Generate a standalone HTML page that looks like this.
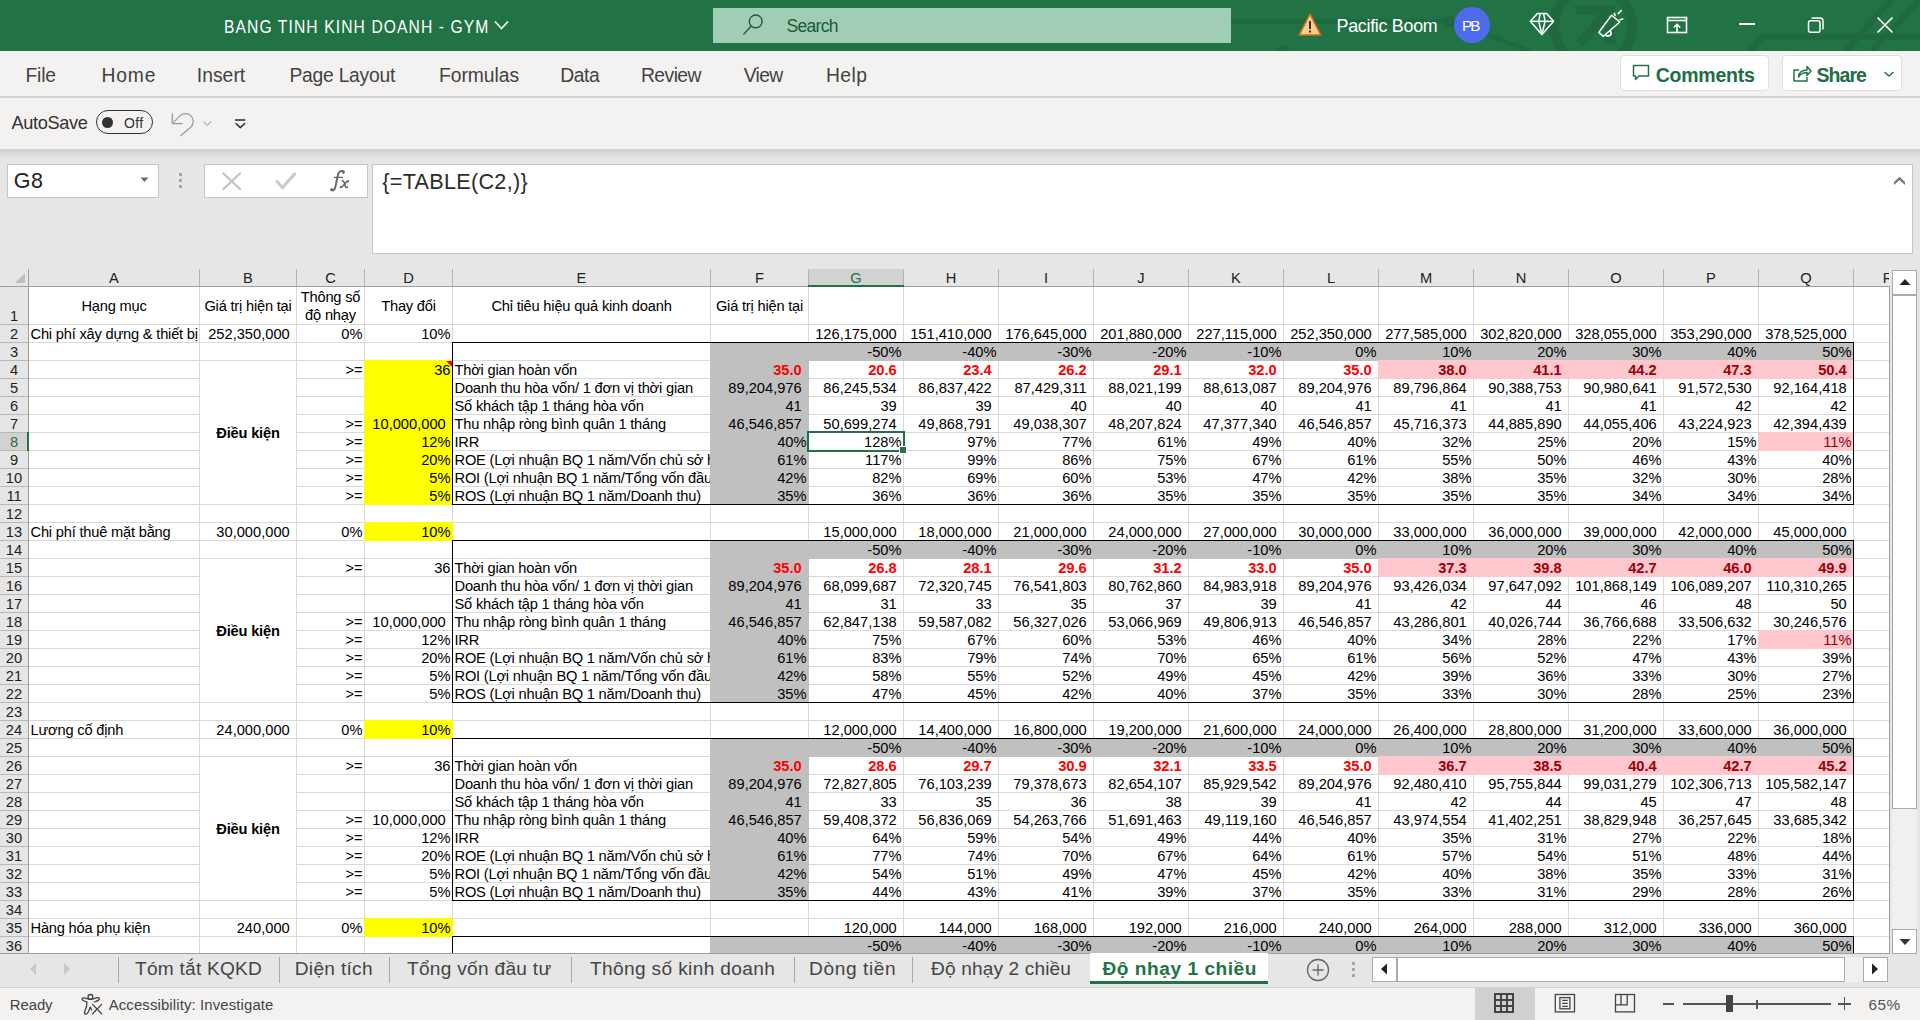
<!DOCTYPE html><html><head><meta charset="utf-8"><style>
*{margin:0;padding:0;box-sizing:border-box}
html,body{width:1920px;height:1020px;overflow:hidden;background:#f3f2f1;font-family:"Liberation Sans",sans-serif}
.a{position:absolute}
.t{position:absolute;white-space:nowrap;line-height:1}
svg{position:absolute;overflow:visible}
.c{position:absolute;white-space:nowrap;font-size:14.67px;line-height:17px;height:17px;color:#000;overflow:hidden}
.hc{position:absolute;white-space:nowrap;font-size:14.67px;line-height:17px;color:#222;text-align:center}
</style></head><body>

<div class="a" style="left:0px;top:0px;width:1920px;height:51px;background:#217346"></div>
<svg width="1920" height="51" style="left:0;top:0" viewBox="0 0 1920 51">
<g stroke="#1f6740" stroke-width="4.5" fill="none" opacity="0.9">
<path d="M1231 21.6 H1446"/><circle cx="1450" cy="21.6" r="3.5"/><path d="M1453 24 L1475 30 L1530 51"/>
<circle cx="1593" cy="26" r="39" stroke-width="10"/>
<path d="M1576 10 H1614.5" stroke-width="10"/><path d="M1610 10 L1580 44" stroke-width="10"/><path d="M1609.6 5 V43.5" stroke-width="10"/>
<path d="M1750 51 L1763 37 H1920" stroke-width="6"/>
<path d="M1891 0 L1845 51" stroke-width="6"/><path d="M1920 0 L1872 51" stroke-width="6"/>
<circle cx="1283" cy="51" r="4"/>
</g></svg>
<div class="t" style="left:223.94px;top:18.20px;font-size:18.2px;color:#fff;font-weight:normal;letter-spacing:1.275px;font-family:'Liberation Sans',sans-serif;transform:scaleX(0.86);transform-origin:0 0;">BANG TINH KINH DOANH - GYM</div>
<svg width="20" height="20" style="left:492px;top:17px" viewBox="0 0 20 20"><path d="M3 4.5 L9.5 11.5 L16 4.5" stroke="#fff" stroke-width="1.6" fill="none"/></svg>
<div class="a" style="left:713px;top:8px;width:518px;height:35px;background:#a1cdb5"></div>
<svg width="30" height="30" style="left:740px;top:12px" viewBox="0 0 30 30"><circle cx="15.7" cy="9.4" r="6.4" stroke="#1b5a37" stroke-width="1.4" fill="none"/><path d="M11.2 14 L3.4 22.6" stroke="#1b5a37" stroke-width="1.4"/></svg>
<div class="t" style="left:786.50px;top:17.80px;font-size:17.5px;color:#1b5a37;font-weight:normal;letter-spacing:-0.700px;font-family:'Liberation Sans',sans-serif;">Search</div>
<svg width="24" height="24" style="left:1298px;top:12px" viewBox="0 0 24 24"><path d="M12 2 L22.8 23 H1.2 Z" fill="#f7d08a" stroke="#d2691e" stroke-width="1.6" stroke-linejoin="round"/><rect x="11" y="9" width="2" height="8" fill="#333"/><rect x="11" y="18.5" width="2" height="2" fill="#333"/></svg>
<div class="t" style="left:1336.50px;top:17.90px;font-size:17.9px;color:#fff;font-weight:normal;letter-spacing:-0.291px;font-family:'Liberation Sans',sans-serif;">Pacific Boom</div>
<div class="a" style="left:1454px;top:7px;width:36px;height:36px;border-radius:50%;background:#4f6bed"></div>
<div class="t" style="left:1462.00px;top:18.00px;font-size:15.3px;color:#fff;font-weight:normal;letter-spacing:-2.000px;font-family:'Liberation Sans',sans-serif;">PB</div>
<svg width="30" height="30" style="left:1527px;top:9px" viewBox="1527 9 30 30"><g stroke="#fff" stroke-width="1.5" fill="none" stroke-linejoin="round"><path d="M1537.4 13.4 H1546.6 L1553.6 21.3 L1541.9 34.4 L1530.3 21.3 Z"/><path d="M1530.3 21.3 H1553.6"/><path d="M1540.2 13.4 L1538.7 21.3 L1541.9 34.4 L1545.1 21.3 L1543.6 13.4"/></g></svg>
<svg width="40" height="40" style="left:1590px;top:5px" viewBox="1590 5 40 40"><g stroke="#fff" stroke-width="1.5" fill="none" stroke-linejoin="round" stroke-linecap="round"><path d="M1598.8 32.4 L1611.5 15.2 L1619.8 22 L1603.2 36.4 Z"/><path d="M1605.5 34.6 A2.8 2.8 0 1 0 1610.6 31.3"/><path d="M1614.2 13.4 L1615.2 15.4"/><path d="M1618.2 13.6 L1621.2 10.6"/><path d="M1620 19.8 L1622.8 19"/></g></svg>
<svg width="24" height="20" style="left:1666px;top:16px" viewBox="0 0 24 20"><g stroke="#fff" stroke-width="1.6" fill="none"><rect x="1.5" y="1.5" width="19" height="15"/><path d="M1.5 4.5 H20.5"/><path d="M11 16.5 V8.5 M7.8 11.5 L11 8.3 L14.2 11.5"/></g></svg>
<div class="a" style="left:1739px;top:23px;width:16px;height:1.5px;background:#fff"></div>
<svg width="20" height="20" style="left:1806px;top:15px" viewBox="0 0 20 20"><g stroke="#fff" stroke-width="1.5" fill="none"><rect x="2.5" y="5.8" width="11.5" height="11.5" rx="2"/><path d="M5.5 3 H14 A3 3 0 0 1 17 6 V14.5"/></g></svg>
<svg width="20" height="20" style="left:1875px;top:15px" viewBox="0 0 20 20"><g stroke="#fff" stroke-width="1.6" fill="none"><path d="M2.5 2.5 L17.5 17.5 M17.5 2.5 L2.5 17.5"/></g></svg>
<div class="a" style="left:0px;top:51px;width:1920px;height:46px;background:#f3f2f1"></div>
<div class="a" style="left:0px;top:96px;width:1920px;height:2px;background:#d6d4d2"></div>
<div class="t" style="left:25.40px;top:65.80px;font-size:19.3px;color:#424242;font-weight:normal;letter-spacing:-0.133px;font-family:'Liberation Sans',sans-serif;">File</div>
<div class="t" style="left:101.50px;top:65.80px;font-size:19.3px;color:#424242;font-weight:normal;letter-spacing:0.833px;font-family:'Liberation Sans',sans-serif;">Home</div>
<div class="t" style="left:196.75px;top:65.80px;font-size:19.3px;color:#424242;font-weight:normal;letter-spacing:0.050px;font-family:'Liberation Sans',sans-serif;">Insert</div>
<div class="t" style="left:289.50px;top:65.80px;font-size:19.3px;color:#424242;font-weight:normal;letter-spacing:-0.250px;font-family:'Liberation Sans',sans-serif;">Page Layout</div>
<div class="t" style="left:439.00px;top:65.80px;font-size:19.3px;color:#424242;font-weight:normal;letter-spacing:-0.036px;font-family:'Liberation Sans',sans-serif;">Formulas</div>
<div class="t" style="left:560.25px;top:65.80px;font-size:19.3px;color:#424242;font-weight:normal;letter-spacing:-0.417px;font-family:'Liberation Sans',sans-serif;">Data</div>
<div class="t" style="left:641.00px;top:65.80px;font-size:19.3px;color:#424242;font-weight:normal;letter-spacing:-0.550px;font-family:'Liberation Sans',sans-serif;">Review</div>
<div class="t" style="left:743.75px;top:65.80px;font-size:19.3px;color:#424242;font-weight:normal;letter-spacing:-0.667px;font-family:'Liberation Sans',sans-serif;">View</div>
<div class="t" style="left:826.00px;top:65.80px;font-size:19.3px;color:#424242;font-weight:normal;letter-spacing:0.417px;font-family:'Liberation Sans',sans-serif;">Help</div>
<div class="a" style="left:1620px;top:55px;width:149px;height:36px;background:#fff;border:1px solid #e1dfdd;border-radius:4px"></div>
<svg width="20" height="20" style="left:1632px;top:64px" viewBox="0 0 20 20"><path d="M1.5 1.5 H16.5 V12 H7 L3.5 15.5 V12 H1.5 Z" stroke="#217346" stroke-width="1.5" fill="none" stroke-linejoin="round"/></svg>
<div class="t" style="left:1655.70px;top:65.50px;font-size:19.5px;color:#1e6e42;font-weight:bold;letter-spacing:-0.243px;font-family:'Liberation Sans',sans-serif;">Comments</div>
<div class="a" style="left:1782px;top:55px;width:120px;height:36px;background:#fff;border:1px solid #e1dfdd;border-radius:4px"></div>
<svg width="20" height="20" style="left:1792px;top:64px" viewBox="0 0 20 20"><g stroke="#217346" stroke-width="1.5" fill="none" stroke-linejoin="round"><path d="M7 6 H2 V17 H15 V13"/><path d="M6.5 13 C7 8 10 6 15 6 V2.5 L19 7 L15 11.5 V8.5 C11 8.5 8.5 10 6.5 13 Z"/></g></svg>
<div class="t" style="left:1816.50px;top:65.50px;font-size:19.5px;color:#1e6e42;font-weight:bold;letter-spacing:-0.950px;font-family:'Liberation Sans',sans-serif;">Share</div>
<svg width="12" height="10" style="left:1883px;top:69px" viewBox="0 0 12 10"><path d="M1.5 3 L6 7 L10.5 3" stroke="#217346" stroke-width="1.5" fill="none"/></svg>
<div class="a" style="left:0px;top:98px;width:1920px;height:51px;background:#f3f2f1"></div>
<div class="t" style="left:11.50px;top:114.00px;font-size:18.2px;color:#323130;font-weight:normal;letter-spacing:-0.357px;font-family:'Liberation Sans',sans-serif;">AutoSave</div>
<div class="a" style="left:96px;top:110px;width:57px;height:24px;border:1px solid #323130;border-radius:12px"></div>
<div class="a" style="left:102px;top:117px;width:11px;height:11px;border-radius:50%;background:#323130"></div>
<div class="t" style="left:124.00px;top:116.30px;font-size:14px;color:#323130;font-weight:normal;letter-spacing:0.375px;font-family:'Liberation Sans',sans-serif;">Off</div>
<svg width="100" height="40" style="left:160px;top:100px" viewBox="160 100 100 40"><g fill="none" stroke-linejoin="round"><path d="M172.3 113.4 V123.6 H182.5" stroke="#9a9a9a" stroke-width="1.3"/><path d="M173.3 122.6 L180 115.9 C183 112.9 188 112.9 191 115.9 C194 118.9 194 124 191 127 L180.3 136" stroke="#9a9a9a" stroke-width="1.3"/><path d="M203.5 121.5 L207.3 125.3 L211.1 121.5" stroke="#b3b3b3" stroke-width="1.1"/><path d="M235 120 H245.3" stroke="#333" stroke-width="1.6"/><path d="M235.6 123.2 L240.3 127.6 L245 123.2" stroke="#333" stroke-width="1.5"/></g></svg>
<div class="a" style="left:0;top:149px;width:1920px;height:10px;background:linear-gradient(#cecece,#e6e6e6)"></div>
<div class="a" style="left:0px;top:159px;width:1920px;height:110px;background:#e6e6e6"></div>
<div class="a" style="left:7px;top:164px;width:152px;height:34px;background:#fff;border:1px solid #c6c6c6"></div>
<div class="t" style="left:13.80px;top:170.60px;font-size:21.5px;color:#222;font-weight:normal;letter-spacing:0.500px;font-family:'Liberation Sans',sans-serif;">G8</div>
<svg width="10" height="6" style="left:140px;top:177px" viewBox="0 0 10 6"><path d="M0.5 0.5 H8.5 L4.5 5 Z" fill="#6b6b6b"/></svg>
<div class="a" style="left:179px;top:173px;width:3px;height:3px;background:#a6a6a6"></div>
<div class="a" style="left:179px;top:179px;width:3px;height:3px;background:#a6a6a6"></div>
<div class="a" style="left:179px;top:185px;width:3px;height:3px;background:#a6a6a6"></div>
<div class="a" style="left:204px;top:164px;width:164px;height:34px;background:#fff;border:1px solid #c6c6c6"></div>
<svg width="20" height="20" style="left:222px;top:171px" viewBox="0 0 20 20"><path d="M1.5 2.5 L18 18 M18 2.5 L1.5 18" stroke="#c2c2c2" stroke-width="2.2" fill="none" stroke-linecap="round"/></svg>
<svg width="22" height="20" style="left:275px;top:171px" viewBox="0 0 22 20"><path d="M2 10.5 L7.5 16.5 L19.5 3" stroke="#cbcbcb" stroke-width="3.2" fill="none" stroke-linecap="round"/></svg>
<svg width="30" height="30" style="left:325px;top:166px" viewBox="325 166 30 30"><g stroke="#666" fill="none" stroke-linecap="round"><path d="M343.6 171.4 C341 170.2 338.7 171.6 337.9 175 L335.6 186 C335 189 333.6 191.2 331.6 190.2" stroke-width="1.9"/><path d="M334.4 177.4 H342.4" stroke-width="1.3"/><path d="M342.2 180.7 C343.6 180.7 344.1 181.6 344.6 183.5 L345.3 186.2 C345.7 187.4 346.6 187.8 347.4 187.1" stroke-width="1.6"/><path d="M348.1 181 C346.5 181.6 344.6 184 342.9 186 C342.1 187 341.4 187.6 340.6 187.3" stroke-width="1.4"/></g><g fill="#666"><circle cx="343.4" cy="172.4" r="1.4"/><circle cx="331.5" cy="189.6" r="1.4"/><circle cx="348" cy="181.4" r="1.1"/><circle cx="340.7" cy="187.2" r="1.1"/></g></svg>
<div class="a" style="left:372px;top:164px;width:1541px;height:90px;background:#fff;border:1px solid #c6c6c6"></div>
<div class="t" style="left:382.20px;top:170.60px;font-size:21.6px;color:#2b2b2b;font-weight:normal;letter-spacing:0.308px;font-family:'Liberation Sans',sans-serif;">{=TABLE(C2,)}</div>
<svg width="20" height="14" style="left:1890px;top:174px" viewBox="1890 174 20 14"><path d="M1894 185 V182 L1899.5 176.7 L1905 182 V185 L1899.5 180 Z" fill="#767676"/></svg>
<div class="a" style="left:0px;top:269px;width:1889px;height:18px;background:#e6e6e6"></div>
<div class="a" style="left:0px;top:287px;width:28px;height:666px;background:#e6e6e6"></div>
<div class="a" style="left:29px;top:287px;width:1860px;height:666px;background:#fff"></div>
<div class="a" style="left:809px;top:269px;width:94px;height:17px;background:#d2d2d2"></div>
<div class="a" style="left:0px;top:433px;width:27px;height:17px;background:#d2d2d2"></div>
<div class="a" style="left:199px;top:287px;width:1px;height:666px;background:#d9d9d9"></div>
<div class="a" style="left:296px;top:287px;width:1px;height:666px;background:#d9d9d9"></div>
<div class="a" style="left:364px;top:287px;width:1px;height:666px;background:#d9d9d9"></div>
<div class="a" style="left:452px;top:287px;width:1px;height:666px;background:#d9d9d9"></div>
<div class="a" style="left:710px;top:287px;width:1px;height:666px;background:#d9d9d9"></div>
<div class="a" style="left:808px;top:287px;width:1px;height:666px;background:#d9d9d9"></div>
<div class="a" style="left:903px;top:287px;width:1px;height:666px;background:#d9d9d9"></div>
<div class="a" style="left:998px;top:287px;width:1px;height:666px;background:#d9d9d9"></div>
<div class="a" style="left:1093px;top:287px;width:1px;height:666px;background:#d9d9d9"></div>
<div class="a" style="left:1188px;top:287px;width:1px;height:666px;background:#d9d9d9"></div>
<div class="a" style="left:1283px;top:287px;width:1px;height:666px;background:#d9d9d9"></div>
<div class="a" style="left:1378px;top:287px;width:1px;height:666px;background:#d9d9d9"></div>
<div class="a" style="left:1473px;top:287px;width:1px;height:666px;background:#d9d9d9"></div>
<div class="a" style="left:1568px;top:287px;width:1px;height:666px;background:#d9d9d9"></div>
<div class="a" style="left:1663px;top:287px;width:1px;height:666px;background:#d9d9d9"></div>
<div class="a" style="left:1758px;top:287px;width:1px;height:666px;background:#d9d9d9"></div>
<div class="a" style="left:1853px;top:287px;width:1px;height:666px;background:#d9d9d9"></div>
<div class="a" style="left:29px;top:324px;width:1860px;height:1px;background:#d9d9d9"></div>
<div class="a" style="left:29px;top:342px;width:1860px;height:1px;background:#d9d9d9"></div>
<div class="a" style="left:29px;top:360px;width:1860px;height:1px;background:#d9d9d9"></div>
<div class="a" style="left:29px;top:378px;width:1860px;height:1px;background:#d9d9d9"></div>
<div class="a" style="left:29px;top:396px;width:1860px;height:1px;background:#d9d9d9"></div>
<div class="a" style="left:29px;top:414px;width:1860px;height:1px;background:#d9d9d9"></div>
<div class="a" style="left:29px;top:432px;width:1860px;height:1px;background:#d9d9d9"></div>
<div class="a" style="left:29px;top:450px;width:1860px;height:1px;background:#d9d9d9"></div>
<div class="a" style="left:29px;top:468px;width:1860px;height:1px;background:#d9d9d9"></div>
<div class="a" style="left:29px;top:486px;width:1860px;height:1px;background:#d9d9d9"></div>
<div class="a" style="left:29px;top:504px;width:1860px;height:1px;background:#d9d9d9"></div>
<div class="a" style="left:29px;top:522px;width:1860px;height:1px;background:#d9d9d9"></div>
<div class="a" style="left:29px;top:540px;width:1860px;height:1px;background:#d9d9d9"></div>
<div class="a" style="left:29px;top:558px;width:1860px;height:1px;background:#d9d9d9"></div>
<div class="a" style="left:29px;top:576px;width:1860px;height:1px;background:#d9d9d9"></div>
<div class="a" style="left:29px;top:594px;width:1860px;height:1px;background:#d9d9d9"></div>
<div class="a" style="left:29px;top:612px;width:1860px;height:1px;background:#d9d9d9"></div>
<div class="a" style="left:29px;top:630px;width:1860px;height:1px;background:#d9d9d9"></div>
<div class="a" style="left:29px;top:648px;width:1860px;height:1px;background:#d9d9d9"></div>
<div class="a" style="left:29px;top:666px;width:1860px;height:1px;background:#d9d9d9"></div>
<div class="a" style="left:29px;top:684px;width:1860px;height:1px;background:#d9d9d9"></div>
<div class="a" style="left:29px;top:702px;width:1860px;height:1px;background:#d9d9d9"></div>
<div class="a" style="left:29px;top:720px;width:1860px;height:1px;background:#d9d9d9"></div>
<div class="a" style="left:29px;top:738px;width:1860px;height:1px;background:#d9d9d9"></div>
<div class="a" style="left:29px;top:756px;width:1860px;height:1px;background:#d9d9d9"></div>
<div class="a" style="left:29px;top:774px;width:1860px;height:1px;background:#d9d9d9"></div>
<div class="a" style="left:29px;top:792px;width:1860px;height:1px;background:#d9d9d9"></div>
<div class="a" style="left:29px;top:810px;width:1860px;height:1px;background:#d9d9d9"></div>
<div class="a" style="left:29px;top:828px;width:1860px;height:1px;background:#d9d9d9"></div>
<div class="a" style="left:29px;top:846px;width:1860px;height:1px;background:#d9d9d9"></div>
<div class="a" style="left:29px;top:864px;width:1860px;height:1px;background:#d9d9d9"></div>
<div class="a" style="left:29px;top:882px;width:1860px;height:1px;background:#d9d9d9"></div>
<div class="a" style="left:29px;top:900px;width:1860px;height:1px;background:#d9d9d9"></div>
<div class="a" style="left:29px;top:918px;width:1860px;height:1px;background:#d9d9d9"></div>
<div class="a" style="left:29px;top:936px;width:1860px;height:1px;background:#d9d9d9"></div>
<div class="a" style="left:199px;top:269px;width:1px;height:17px;background:#b3b3b3"></div>
<div class="a" style="left:296px;top:269px;width:1px;height:17px;background:#b3b3b3"></div>
<div class="a" style="left:364px;top:269px;width:1px;height:17px;background:#b3b3b3"></div>
<div class="a" style="left:452px;top:269px;width:1px;height:17px;background:#b3b3b3"></div>
<div class="a" style="left:710px;top:269px;width:1px;height:17px;background:#b3b3b3"></div>
<div class="a" style="left:808px;top:269px;width:1px;height:17px;background:#b3b3b3"></div>
<div class="a" style="left:903px;top:269px;width:1px;height:17px;background:#b3b3b3"></div>
<div class="a" style="left:998px;top:269px;width:1px;height:17px;background:#b3b3b3"></div>
<div class="a" style="left:1093px;top:269px;width:1px;height:17px;background:#b3b3b3"></div>
<div class="a" style="left:1188px;top:269px;width:1px;height:17px;background:#b3b3b3"></div>
<div class="a" style="left:1283px;top:269px;width:1px;height:17px;background:#b3b3b3"></div>
<div class="a" style="left:1378px;top:269px;width:1px;height:17px;background:#b3b3b3"></div>
<div class="a" style="left:1473px;top:269px;width:1px;height:17px;background:#b3b3b3"></div>
<div class="a" style="left:1568px;top:269px;width:1px;height:17px;background:#b3b3b3"></div>
<div class="a" style="left:1663px;top:269px;width:1px;height:17px;background:#b3b3b3"></div>
<div class="a" style="left:1758px;top:269px;width:1px;height:17px;background:#b3b3b3"></div>
<div class="a" style="left:1853px;top:269px;width:1px;height:17px;background:#b3b3b3"></div>
<div class="a" style="left:0px;top:324px;width:28px;height:1px;background:#b8b8b8"></div>
<div class="a" style="left:0px;top:342px;width:28px;height:1px;background:#b8b8b8"></div>
<div class="a" style="left:0px;top:360px;width:28px;height:1px;background:#b8b8b8"></div>
<div class="a" style="left:0px;top:378px;width:28px;height:1px;background:#b8b8b8"></div>
<div class="a" style="left:0px;top:396px;width:28px;height:1px;background:#b8b8b8"></div>
<div class="a" style="left:0px;top:414px;width:28px;height:1px;background:#b8b8b8"></div>
<div class="a" style="left:0px;top:432px;width:28px;height:1px;background:#b8b8b8"></div>
<div class="a" style="left:0px;top:450px;width:28px;height:1px;background:#b8b8b8"></div>
<div class="a" style="left:0px;top:468px;width:28px;height:1px;background:#b8b8b8"></div>
<div class="a" style="left:0px;top:486px;width:28px;height:1px;background:#b8b8b8"></div>
<div class="a" style="left:0px;top:504px;width:28px;height:1px;background:#b8b8b8"></div>
<div class="a" style="left:0px;top:522px;width:28px;height:1px;background:#b8b8b8"></div>
<div class="a" style="left:0px;top:540px;width:28px;height:1px;background:#b8b8b8"></div>
<div class="a" style="left:0px;top:558px;width:28px;height:1px;background:#b8b8b8"></div>
<div class="a" style="left:0px;top:576px;width:28px;height:1px;background:#b8b8b8"></div>
<div class="a" style="left:0px;top:594px;width:28px;height:1px;background:#b8b8b8"></div>
<div class="a" style="left:0px;top:612px;width:28px;height:1px;background:#b8b8b8"></div>
<div class="a" style="left:0px;top:630px;width:28px;height:1px;background:#b8b8b8"></div>
<div class="a" style="left:0px;top:648px;width:28px;height:1px;background:#b8b8b8"></div>
<div class="a" style="left:0px;top:666px;width:28px;height:1px;background:#b8b8b8"></div>
<div class="a" style="left:0px;top:684px;width:28px;height:1px;background:#b8b8b8"></div>
<div class="a" style="left:0px;top:702px;width:28px;height:1px;background:#b8b8b8"></div>
<div class="a" style="left:0px;top:720px;width:28px;height:1px;background:#b8b8b8"></div>
<div class="a" style="left:0px;top:738px;width:28px;height:1px;background:#b8b8b8"></div>
<div class="a" style="left:0px;top:756px;width:28px;height:1px;background:#b8b8b8"></div>
<div class="a" style="left:0px;top:774px;width:28px;height:1px;background:#b8b8b8"></div>
<div class="a" style="left:0px;top:792px;width:28px;height:1px;background:#b8b8b8"></div>
<div class="a" style="left:0px;top:810px;width:28px;height:1px;background:#b8b8b8"></div>
<div class="a" style="left:0px;top:828px;width:28px;height:1px;background:#b8b8b8"></div>
<div class="a" style="left:0px;top:846px;width:28px;height:1px;background:#b8b8b8"></div>
<div class="a" style="left:0px;top:864px;width:28px;height:1px;background:#b8b8b8"></div>
<div class="a" style="left:0px;top:882px;width:28px;height:1px;background:#b8b8b8"></div>
<div class="a" style="left:0px;top:900px;width:28px;height:1px;background:#b8b8b8"></div>
<div class="a" style="left:0px;top:918px;width:28px;height:1px;background:#b8b8b8"></div>
<div class="a" style="left:0px;top:936px;width:28px;height:1px;background:#b8b8b8"></div>
<div class="a" style="left:0px;top:286px;width:1889px;height:1px;background:#9e9e9e"></div>
<div class="a" style="left:28px;top:269px;width:1px;height:684px;background:#9e9e9e"></div>
<div class="a" style="left:0px;top:953px;width:1889px;height:1px;background:#9e9e9e"></div>
<div class="a" style="left:1889px;top:286px;width:1px;height:668px;background:#9e9e9e"></div>
<div class="a" style="left:808px;top:285px;width:96px;height:2px;background:#217346"></div>
<div class="a" style="left:27px;top:432px;width:2px;height:19px;background:#217346"></div>
<svg width="12" height="12" style="left:15px;top:273px" viewBox="0 0 12 12"><path d="M10 0 V10 H0 Z" fill="#bfbfbf"/></svg>
<div class="hc" style="left:29px;top:270.40px;width:170px;color:#222">A</div>
<div class="hc" style="left:200px;top:270.40px;width:96px;color:#222">B</div>
<div class="hc" style="left:297px;top:270.40px;width:67px;color:#222">C</div>
<div class="hc" style="left:365px;top:270.40px;width:87px;color:#222">D</div>
<div class="hc" style="left:453px;top:270.40px;width:257px;color:#222">E</div>
<div class="hc" style="left:711px;top:270.40px;width:97px;color:#222">F</div>
<div class="hc" style="left:809px;top:270.40px;width:94px;color:#217346">G</div>
<div class="hc" style="left:904px;top:270.40px;width:94px;color:#222">H</div>
<div class="hc" style="left:999px;top:270.40px;width:94px;color:#222">I</div>
<div class="hc" style="left:1094px;top:270.40px;width:94px;color:#222">J</div>
<div class="hc" style="left:1189px;top:270.40px;width:94px;color:#222">K</div>
<div class="hc" style="left:1284px;top:270.40px;width:94px;color:#222">L</div>
<div class="hc" style="left:1379px;top:270.40px;width:94px;color:#222">M</div>
<div class="hc" style="left:1474px;top:270.40px;width:94px;color:#222">N</div>
<div class="hc" style="left:1569px;top:270.40px;width:94px;color:#222">O</div>
<div class="hc" style="left:1664px;top:270.40px;width:94px;color:#222">P</div>
<div class="hc" style="left:1759px;top:270.40px;width:94px;color:#222">Q</div>
<div class="a" style="left:1854px;top:269px;width:35px;height:17px;overflow:hidden"><div class="hc" style="left:24px;top:1.4px;width:20px;color:#222">R</div></div>
<div class="hc" style="left:0px;top:308.40px;width:28px;color:#222">1</div>
<div class="hc" style="left:0px;top:326.40px;width:28px;color:#222">2</div>
<div class="hc" style="left:0px;top:344.40px;width:28px;color:#222">3</div>
<div class="hc" style="left:0px;top:362.40px;width:28px;color:#222">4</div>
<div class="hc" style="left:0px;top:380.40px;width:28px;color:#222">5</div>
<div class="hc" style="left:0px;top:398.40px;width:28px;color:#222">6</div>
<div class="hc" style="left:0px;top:416.40px;width:28px;color:#222">7</div>
<div class="hc" style="left:0px;top:434.40px;width:28px;color:#217346">8</div>
<div class="hc" style="left:0px;top:452.40px;width:28px;color:#222">9</div>
<div class="hc" style="left:0px;top:470.40px;width:28px;color:#222">10</div>
<div class="hc" style="left:0px;top:488.40px;width:28px;color:#222">11</div>
<div class="hc" style="left:0px;top:506.40px;width:28px;color:#222">12</div>
<div class="hc" style="left:0px;top:524.40px;width:28px;color:#222">13</div>
<div class="hc" style="left:0px;top:542.40px;width:28px;color:#222">14</div>
<div class="hc" style="left:0px;top:560.40px;width:28px;color:#222">15</div>
<div class="hc" style="left:0px;top:578.40px;width:28px;color:#222">16</div>
<div class="hc" style="left:0px;top:596.40px;width:28px;color:#222">17</div>
<div class="hc" style="left:0px;top:614.40px;width:28px;color:#222">18</div>
<div class="hc" style="left:0px;top:632.40px;width:28px;color:#222">19</div>
<div class="hc" style="left:0px;top:650.40px;width:28px;color:#222">20</div>
<div class="hc" style="left:0px;top:668.40px;width:28px;color:#222">21</div>
<div class="hc" style="left:0px;top:686.40px;width:28px;color:#222">22</div>
<div class="hc" style="left:0px;top:704.40px;width:28px;color:#222">23</div>
<div class="hc" style="left:0px;top:722.40px;width:28px;color:#222">24</div>
<div class="hc" style="left:0px;top:740.40px;width:28px;color:#222">25</div>
<div class="hc" style="left:0px;top:758.40px;width:28px;color:#222">26</div>
<div class="hc" style="left:0px;top:776.40px;width:28px;color:#222">27</div>
<div class="hc" style="left:0px;top:794.40px;width:28px;color:#222">28</div>
<div class="hc" style="left:0px;top:812.40px;width:28px;color:#222">29</div>
<div class="hc" style="left:0px;top:830.40px;width:28px;color:#222">30</div>
<div class="hc" style="left:0px;top:848.40px;width:28px;color:#222">31</div>
<div class="hc" style="left:0px;top:866.40px;width:28px;color:#222">32</div>
<div class="hc" style="left:0px;top:884.40px;width:28px;color:#222">33</div>
<div class="hc" style="left:0px;top:902.40px;width:28px;color:#222">34</div>
<div class="hc" style="left:0px;top:920.40px;width:28px;color:#222">35</div>
<div class="hc" style="left:0px;top:938.40px;width:28px;color:#222">36</div>
<div class="a" style="left:710px;top:342px;width:99px;height:163px;background:#c0c0c0"></div>
<div class="a" style="left:808px;top:342px;width:1046px;height:19px;background:#c0c0c0"></div>
<div class="a" style="left:200px;top:361px;width:96px;height:143px;background:#fff"></div>
<div class="a" style="left:710px;top:540px;width:99px;height:163px;background:#c0c0c0"></div>
<div class="a" style="left:808px;top:540px;width:1046px;height:19px;background:#c0c0c0"></div>
<div class="a" style="left:200px;top:559px;width:96px;height:143px;background:#fff"></div>
<div class="a" style="left:364px;top:522px;width:89px;height:19px;background:#ffff00"></div>
<div class="a" style="left:710px;top:738px;width:99px;height:163px;background:#c0c0c0"></div>
<div class="a" style="left:808px;top:738px;width:1046px;height:19px;background:#c0c0c0"></div>
<div class="a" style="left:200px;top:757px;width:96px;height:143px;background:#fff"></div>
<div class="a" style="left:364px;top:720px;width:89px;height:19px;background:#ffff00"></div>
<div class="a" style="left:710px;top:936px;width:99px;height:17px;background:#c0c0c0"></div>
<div class="a" style="left:808px;top:936px;width:1046px;height:17px;background:#c0c0c0"></div>
<div class="a" style="left:364px;top:918px;width:89px;height:19px;background:#ffff00"></div>
<div class="a" style="left:364px;top:360px;width:89px;height:145px;background:#ffff00"></div>
<div class="a" style="left:1378px;top:360px;width:476px;height:19px;background:#ffc7ce"></div>
<div class="a" style="left:1758px;top:432px;width:96px;height:19px;background:#ffc7ce"></div>
<div class="a" style="left:1378px;top:558px;width:476px;height:19px;background:#ffc7ce"></div>
<div class="a" style="left:1758px;top:630px;width:96px;height:19px;background:#ffc7ce"></div>
<div class="a" style="left:1378px;top:756px;width:476px;height:19px;background:#ffc7ce"></div>
<div class="a" style="left:452px;top:342px;width:1402px;height:1px;background:#000"></div>
<div class="a" style="left:452px;top:342px;width:1px;height:162px;background:#000"></div>
<div class="a" style="left:1853px;top:342px;width:1px;height:162px;background:#000"></div>
<div class="a" style="left:452px;top:504px;width:1402px;height:1px;background:#000"></div>
<div class="a" style="left:452px;top:540px;width:1402px;height:1px;background:#000"></div>
<div class="a" style="left:452px;top:540px;width:1px;height:162px;background:#000"></div>
<div class="a" style="left:1853px;top:540px;width:1px;height:162px;background:#000"></div>
<div class="a" style="left:452px;top:702px;width:1402px;height:1px;background:#000"></div>
<div class="a" style="left:452px;top:738px;width:1402px;height:1px;background:#000"></div>
<div class="a" style="left:452px;top:738px;width:1px;height:162px;background:#000"></div>
<div class="a" style="left:1853px;top:738px;width:1px;height:162px;background:#000"></div>
<div class="a" style="left:452px;top:900px;width:1402px;height:1px;background:#000"></div>
<div class="a" style="left:452px;top:936px;width:1402px;height:1px;background:#000"></div>
<div class="a" style="left:452px;top:936px;width:1px;height:17px;background:#000"></div>
<div class="a" style="left:1853px;top:936px;width:1px;height:17px;background:#000"></div>
<div class="c" style="left:29px;top:298.40px;width:170px;color:#000;text-align:center;letter-spacing:-0.2px;">Hạng mục</div>
<div class="c" style="left:200px;top:298.40px;width:96px;color:#000;text-align:center;letter-spacing:-0.2px;">Giá trị hiện tại</div>
<div class="c" style="left:365px;top:298.40px;width:87px;color:#000;text-align:center;letter-spacing:-0.2px;">Thay đổi</div>
<div class="c" style="left:453px;top:298.40px;width:257px;color:#000;text-align:center;letter-spacing:-0.2px;">Chỉ tiêu hiệu quả kinh doanh</div>
<div class="c" style="left:711px;top:298.40px;width:97px;color:#000;text-align:center;letter-spacing:-0.2px;">Giá trị hiện tại</div>
<div class="c" style="left:297px;top:289.40px;width:67px;color:#000;text-align:center;letter-spacing:-0.2px;">Thông số</div>
<div class="c" style="left:297px;top:307.40px;width:67px;color:#000;text-align:center;letter-spacing:-0.2px;">độ nhạy</div>
<div class="c" style="left:29px;top:326.40px;width:170px;color:#000;text-align:left;padding-left:1.5px;letter-spacing:-0.2px;overflow:visible;">Chi phí xây dựng &amp; thiết bị</div>
<div class="c" style="left:200px;top:326.40px;width:96px;color:#000;text-align:right;padding-right:6.3px;">252,350,000</div>
<div class="c" style="left:297px;top:326.40px;width:67px;color:#000;text-align:right;padding-right:1.5px;">0%</div>
<div class="c" style="left:365px;top:326.40px;width:87px;color:#000;text-align:right;padding-right:1.5px;">10%</div>
<div class="c" style="left:809px;top:326.40px;width:94px;color:#000;text-align:right;padding-right:6.3px;">126,175,000</div>
<div class="c" style="left:809px;top:344.40px;width:94px;color:#000;text-align:right;padding-right:1.5px;">-50%</div>
<div class="c" style="left:904px;top:326.40px;width:94px;color:#000;text-align:right;padding-right:6.3px;">151,410,000</div>
<div class="c" style="left:904px;top:344.40px;width:94px;color:#000;text-align:right;padding-right:1.5px;">-40%</div>
<div class="c" style="left:999px;top:326.40px;width:94px;color:#000;text-align:right;padding-right:6.3px;">176,645,000</div>
<div class="c" style="left:999px;top:344.40px;width:94px;color:#000;text-align:right;padding-right:1.5px;">-30%</div>
<div class="c" style="left:1094px;top:326.40px;width:94px;color:#000;text-align:right;padding-right:6.3px;">201,880,000</div>
<div class="c" style="left:1094px;top:344.40px;width:94px;color:#000;text-align:right;padding-right:1.5px;">-20%</div>
<div class="c" style="left:1189px;top:326.40px;width:94px;color:#000;text-align:right;padding-right:6.3px;">227,115,000</div>
<div class="c" style="left:1189px;top:344.40px;width:94px;color:#000;text-align:right;padding-right:1.5px;">-10%</div>
<div class="c" style="left:1284px;top:326.40px;width:94px;color:#000;text-align:right;padding-right:6.3px;">252,350,000</div>
<div class="c" style="left:1284px;top:344.40px;width:94px;color:#000;text-align:right;padding-right:1.5px;">0%</div>
<div class="c" style="left:1379px;top:326.40px;width:94px;color:#000;text-align:right;padding-right:6.3px;">277,585,000</div>
<div class="c" style="left:1379px;top:344.40px;width:94px;color:#000;text-align:right;padding-right:1.5px;">10%</div>
<div class="c" style="left:1474px;top:326.40px;width:94px;color:#000;text-align:right;padding-right:6.3px;">302,820,000</div>
<div class="c" style="left:1474px;top:344.40px;width:94px;color:#000;text-align:right;padding-right:1.5px;">20%</div>
<div class="c" style="left:1569px;top:326.40px;width:94px;color:#000;text-align:right;padding-right:6.3px;">328,055,000</div>
<div class="c" style="left:1569px;top:344.40px;width:94px;color:#000;text-align:right;padding-right:1.5px;">30%</div>
<div class="c" style="left:1664px;top:326.40px;width:94px;color:#000;text-align:right;padding-right:6.3px;">353,290,000</div>
<div class="c" style="left:1664px;top:344.40px;width:94px;color:#000;text-align:right;padding-right:1.5px;">40%</div>
<div class="c" style="left:1759px;top:326.40px;width:94px;color:#000;text-align:right;padding-right:6.3px;">378,525,000</div>
<div class="c" style="left:1759px;top:344.40px;width:94px;color:#000;text-align:right;padding-right:1.5px;">50%</div>
<div class="c" style="left:200px;top:424.90px;width:96px;color:#000;text-align:center;letter-spacing:-0.2px;font-weight:bold;">Điều kiện</div>
<div class="c" style="left:297px;top:362.40px;width:67px;color:#000;text-align:right;padding-right:1.5px;">&gt;=</div>
<div class="c" style="left:365px;top:362.40px;width:87px;color:#000;text-align:right;padding-right:1.5px;">36</div>
<div class="c" style="left:453px;top:362.40px;width:257px;color:#000;text-align:left;padding-left:1.5px;letter-spacing:-0.2px;">Thời gian hoàn vốn</div>
<div class="c" style="left:711px;top:362.40px;width:97px;color:#ff0000;font-weight:bold;text-align:right;padding-right:6.3px;">35.0</div>
<div class="c" style="left:809px;top:362.40px;width:94px;color:#ff0000;font-weight:bold;text-align:right;padding-right:6.3px;">20.6</div>
<div class="c" style="left:904px;top:362.40px;width:94px;color:#ff0000;font-weight:bold;text-align:right;padding-right:6.3px;">23.4</div>
<div class="c" style="left:999px;top:362.40px;width:94px;color:#ff0000;font-weight:bold;text-align:right;padding-right:6.3px;">26.2</div>
<div class="c" style="left:1094px;top:362.40px;width:94px;color:#ff0000;font-weight:bold;text-align:right;padding-right:6.3px;">29.1</div>
<div class="c" style="left:1189px;top:362.40px;width:94px;color:#ff0000;font-weight:bold;text-align:right;padding-right:6.3px;">32.0</div>
<div class="c" style="left:1284px;top:362.40px;width:94px;color:#ff0000;font-weight:bold;text-align:right;padding-right:6.3px;">35.0</div>
<div class="c" style="left:1379px;top:362.40px;width:94px;color:#9c0006;font-weight:bold;text-align:right;padding-right:6.3px;">38.0</div>
<div class="c" style="left:1474px;top:362.40px;width:94px;color:#9c0006;font-weight:bold;text-align:right;padding-right:6.3px;">41.1</div>
<div class="c" style="left:1569px;top:362.40px;width:94px;color:#9c0006;font-weight:bold;text-align:right;padding-right:6.3px;">44.2</div>
<div class="c" style="left:1664px;top:362.40px;width:94px;color:#9c0006;font-weight:bold;text-align:right;padding-right:6.3px;">47.3</div>
<div class="c" style="left:1759px;top:362.40px;width:94px;color:#9c0006;font-weight:bold;text-align:right;padding-right:6.3px;">50.4</div>
<div class="c" style="left:453px;top:380.40px;width:257px;color:#000;text-align:left;padding-left:1.5px;letter-spacing:-0.2px;">Doanh thu hòa vốn/ 1 đơn vị thời gian</div>
<div class="c" style="left:711px;top:380.40px;width:97px;color:#000;text-align:right;padding-right:6.3px;">89,204,976</div>
<div class="c" style="left:809px;top:380.40px;width:94px;color:#000;text-align:right;padding-right:6.3px;">86,245,534</div>
<div class="c" style="left:904px;top:380.40px;width:94px;color:#000;text-align:right;padding-right:6.3px;">86,837,422</div>
<div class="c" style="left:999px;top:380.40px;width:94px;color:#000;text-align:right;padding-right:6.3px;">87,429,311</div>
<div class="c" style="left:1094px;top:380.40px;width:94px;color:#000;text-align:right;padding-right:6.3px;">88,021,199</div>
<div class="c" style="left:1189px;top:380.40px;width:94px;color:#000;text-align:right;padding-right:6.3px;">88,613,087</div>
<div class="c" style="left:1284px;top:380.40px;width:94px;color:#000;text-align:right;padding-right:6.3px;">89,204,976</div>
<div class="c" style="left:1379px;top:380.40px;width:94px;color:#000;text-align:right;padding-right:6.3px;">89,796,864</div>
<div class="c" style="left:1474px;top:380.40px;width:94px;color:#000;text-align:right;padding-right:6.3px;">90,388,753</div>
<div class="c" style="left:1569px;top:380.40px;width:94px;color:#000;text-align:right;padding-right:6.3px;">90,980,641</div>
<div class="c" style="left:1664px;top:380.40px;width:94px;color:#000;text-align:right;padding-right:6.3px;">91,572,530</div>
<div class="c" style="left:1759px;top:380.40px;width:94px;color:#000;text-align:right;padding-right:6.3px;">92,164,418</div>
<div class="c" style="left:453px;top:398.40px;width:257px;color:#000;text-align:left;padding-left:1.5px;letter-spacing:-0.2px;">Số khách tập 1 tháng hòa vốn</div>
<div class="c" style="left:711px;top:398.40px;width:97px;color:#000;text-align:right;padding-right:6.3px;">41</div>
<div class="c" style="left:809px;top:398.40px;width:94px;color:#000;text-align:right;padding-right:6.3px;">39</div>
<div class="c" style="left:904px;top:398.40px;width:94px;color:#000;text-align:right;padding-right:6.3px;">39</div>
<div class="c" style="left:999px;top:398.40px;width:94px;color:#000;text-align:right;padding-right:6.3px;">40</div>
<div class="c" style="left:1094px;top:398.40px;width:94px;color:#000;text-align:right;padding-right:6.3px;">40</div>
<div class="c" style="left:1189px;top:398.40px;width:94px;color:#000;text-align:right;padding-right:6.3px;">40</div>
<div class="c" style="left:1284px;top:398.40px;width:94px;color:#000;text-align:right;padding-right:6.3px;">41</div>
<div class="c" style="left:1379px;top:398.40px;width:94px;color:#000;text-align:right;padding-right:6.3px;">41</div>
<div class="c" style="left:1474px;top:398.40px;width:94px;color:#000;text-align:right;padding-right:6.3px;">41</div>
<div class="c" style="left:1569px;top:398.40px;width:94px;color:#000;text-align:right;padding-right:6.3px;">41</div>
<div class="c" style="left:1664px;top:398.40px;width:94px;color:#000;text-align:right;padding-right:6.3px;">42</div>
<div class="c" style="left:1759px;top:398.40px;width:94px;color:#000;text-align:right;padding-right:6.3px;">42</div>
<div class="c" style="left:297px;top:416.40px;width:67px;color:#000;text-align:right;padding-right:1.5px;">&gt;=</div>
<div class="c" style="left:365px;top:416.40px;width:87px;color:#000;text-align:right;padding-right:6.3px;">10,000,000</div>
<div class="c" style="left:453px;top:416.40px;width:257px;color:#000;text-align:left;padding-left:1.5px;letter-spacing:-0.2px;">Thu nhập ròng bình quân 1 tháng</div>
<div class="c" style="left:711px;top:416.40px;width:97px;color:#000;text-align:right;padding-right:6.3px;">46,546,857</div>
<div class="c" style="left:809px;top:416.40px;width:94px;color:#000;text-align:right;padding-right:6.3px;">50,699,274</div>
<div class="c" style="left:904px;top:416.40px;width:94px;color:#000;text-align:right;padding-right:6.3px;">49,868,791</div>
<div class="c" style="left:999px;top:416.40px;width:94px;color:#000;text-align:right;padding-right:6.3px;">49,038,307</div>
<div class="c" style="left:1094px;top:416.40px;width:94px;color:#000;text-align:right;padding-right:6.3px;">48,207,824</div>
<div class="c" style="left:1189px;top:416.40px;width:94px;color:#000;text-align:right;padding-right:6.3px;">47,377,340</div>
<div class="c" style="left:1284px;top:416.40px;width:94px;color:#000;text-align:right;padding-right:6.3px;">46,546,857</div>
<div class="c" style="left:1379px;top:416.40px;width:94px;color:#000;text-align:right;padding-right:6.3px;">45,716,373</div>
<div class="c" style="left:1474px;top:416.40px;width:94px;color:#000;text-align:right;padding-right:6.3px;">44,885,890</div>
<div class="c" style="left:1569px;top:416.40px;width:94px;color:#000;text-align:right;padding-right:6.3px;">44,055,406</div>
<div class="c" style="left:1664px;top:416.40px;width:94px;color:#000;text-align:right;padding-right:6.3px;">43,224,923</div>
<div class="c" style="left:1759px;top:416.40px;width:94px;color:#000;text-align:right;padding-right:6.3px;">42,394,439</div>
<div class="c" style="left:297px;top:434.40px;width:67px;color:#000;text-align:right;padding-right:1.5px;">&gt;=</div>
<div class="c" style="left:365px;top:434.40px;width:87px;color:#000;text-align:right;padding-right:1.5px;">12%</div>
<div class="c" style="left:453px;top:434.40px;width:257px;color:#000;text-align:left;padding-left:1.5px;letter-spacing:-0.2px;">IRR</div>
<div class="c" style="left:711px;top:434.40px;width:97px;color:#000;text-align:right;padding-right:1.5px;">40%</div>
<div class="c" style="left:809px;top:434.40px;width:94px;color:#000;text-align:right;padding-right:1.5px;">128%</div>
<div class="c" style="left:904px;top:434.40px;width:94px;color:#000;text-align:right;padding-right:1.5px;">97%</div>
<div class="c" style="left:999px;top:434.40px;width:94px;color:#000;text-align:right;padding-right:1.5px;">77%</div>
<div class="c" style="left:1094px;top:434.40px;width:94px;color:#000;text-align:right;padding-right:1.5px;">61%</div>
<div class="c" style="left:1189px;top:434.40px;width:94px;color:#000;text-align:right;padding-right:1.5px;">49%</div>
<div class="c" style="left:1284px;top:434.40px;width:94px;color:#000;text-align:right;padding-right:1.5px;">40%</div>
<div class="c" style="left:1379px;top:434.40px;width:94px;color:#000;text-align:right;padding-right:1.5px;">32%</div>
<div class="c" style="left:1474px;top:434.40px;width:94px;color:#000;text-align:right;padding-right:1.5px;">25%</div>
<div class="c" style="left:1569px;top:434.40px;width:94px;color:#000;text-align:right;padding-right:1.5px;">20%</div>
<div class="c" style="left:1664px;top:434.40px;width:94px;color:#000;text-align:right;padding-right:1.5px;">15%</div>
<div class="c" style="left:1759px;top:434.40px;width:94px;color:#9c0006;text-align:right;padding-right:1.5px;">11%</div>
<div class="c" style="left:297px;top:452.40px;width:67px;color:#000;text-align:right;padding-right:1.5px;">&gt;=</div>
<div class="c" style="left:365px;top:452.40px;width:87px;color:#000;text-align:right;padding-right:1.5px;">20%</div>
<div class="c" style="left:453px;top:452.40px;width:257px;color:#000;text-align:left;padding-left:1.5px;letter-spacing:-0.2px;">ROE (Lợi nhuận BQ 1 năm/Vốn chủ sở hữu)</div>
<div class="c" style="left:711px;top:452.40px;width:97px;color:#000;text-align:right;padding-right:1.5px;">61%</div>
<div class="c" style="left:809px;top:452.40px;width:94px;color:#000;text-align:right;padding-right:1.5px;">117%</div>
<div class="c" style="left:904px;top:452.40px;width:94px;color:#000;text-align:right;padding-right:1.5px;">99%</div>
<div class="c" style="left:999px;top:452.40px;width:94px;color:#000;text-align:right;padding-right:1.5px;">86%</div>
<div class="c" style="left:1094px;top:452.40px;width:94px;color:#000;text-align:right;padding-right:1.5px;">75%</div>
<div class="c" style="left:1189px;top:452.40px;width:94px;color:#000;text-align:right;padding-right:1.5px;">67%</div>
<div class="c" style="left:1284px;top:452.40px;width:94px;color:#000;text-align:right;padding-right:1.5px;">61%</div>
<div class="c" style="left:1379px;top:452.40px;width:94px;color:#000;text-align:right;padding-right:1.5px;">55%</div>
<div class="c" style="left:1474px;top:452.40px;width:94px;color:#000;text-align:right;padding-right:1.5px;">50%</div>
<div class="c" style="left:1569px;top:452.40px;width:94px;color:#000;text-align:right;padding-right:1.5px;">46%</div>
<div class="c" style="left:1664px;top:452.40px;width:94px;color:#000;text-align:right;padding-right:1.5px;">43%</div>
<div class="c" style="left:1759px;top:452.40px;width:94px;color:#000;text-align:right;padding-right:1.5px;">40%</div>
<div class="c" style="left:297px;top:470.40px;width:67px;color:#000;text-align:right;padding-right:1.5px;">&gt;=</div>
<div class="c" style="left:365px;top:470.40px;width:87px;color:#000;text-align:right;padding-right:1.5px;">5%</div>
<div class="c" style="left:453px;top:470.40px;width:257px;color:#000;text-align:left;padding-left:1.5px;letter-spacing:-0.2px;">ROI (Lợi nhuận BQ 1 năm/Tổng vốn đầu tư)</div>
<div class="c" style="left:711px;top:470.40px;width:97px;color:#000;text-align:right;padding-right:1.5px;">42%</div>
<div class="c" style="left:809px;top:470.40px;width:94px;color:#000;text-align:right;padding-right:1.5px;">82%</div>
<div class="c" style="left:904px;top:470.40px;width:94px;color:#000;text-align:right;padding-right:1.5px;">69%</div>
<div class="c" style="left:999px;top:470.40px;width:94px;color:#000;text-align:right;padding-right:1.5px;">60%</div>
<div class="c" style="left:1094px;top:470.40px;width:94px;color:#000;text-align:right;padding-right:1.5px;">53%</div>
<div class="c" style="left:1189px;top:470.40px;width:94px;color:#000;text-align:right;padding-right:1.5px;">47%</div>
<div class="c" style="left:1284px;top:470.40px;width:94px;color:#000;text-align:right;padding-right:1.5px;">42%</div>
<div class="c" style="left:1379px;top:470.40px;width:94px;color:#000;text-align:right;padding-right:1.5px;">38%</div>
<div class="c" style="left:1474px;top:470.40px;width:94px;color:#000;text-align:right;padding-right:1.5px;">35%</div>
<div class="c" style="left:1569px;top:470.40px;width:94px;color:#000;text-align:right;padding-right:1.5px;">32%</div>
<div class="c" style="left:1664px;top:470.40px;width:94px;color:#000;text-align:right;padding-right:1.5px;">30%</div>
<div class="c" style="left:1759px;top:470.40px;width:94px;color:#000;text-align:right;padding-right:1.5px;">28%</div>
<div class="c" style="left:297px;top:488.40px;width:67px;color:#000;text-align:right;padding-right:1.5px;">&gt;=</div>
<div class="c" style="left:365px;top:488.40px;width:87px;color:#000;text-align:right;padding-right:1.5px;">5%</div>
<div class="c" style="left:453px;top:488.40px;width:257px;color:#000;text-align:left;padding-left:1.5px;letter-spacing:-0.2px;">ROS (Lợi nhuận BQ 1 năm/Doanh thu)</div>
<div class="c" style="left:711px;top:488.40px;width:97px;color:#000;text-align:right;padding-right:1.5px;">35%</div>
<div class="c" style="left:809px;top:488.40px;width:94px;color:#000;text-align:right;padding-right:1.5px;">36%</div>
<div class="c" style="left:904px;top:488.40px;width:94px;color:#000;text-align:right;padding-right:1.5px;">36%</div>
<div class="c" style="left:999px;top:488.40px;width:94px;color:#000;text-align:right;padding-right:1.5px;">36%</div>
<div class="c" style="left:1094px;top:488.40px;width:94px;color:#000;text-align:right;padding-right:1.5px;">35%</div>
<div class="c" style="left:1189px;top:488.40px;width:94px;color:#000;text-align:right;padding-right:1.5px;">35%</div>
<div class="c" style="left:1284px;top:488.40px;width:94px;color:#000;text-align:right;padding-right:1.5px;">35%</div>
<div class="c" style="left:1379px;top:488.40px;width:94px;color:#000;text-align:right;padding-right:1.5px;">35%</div>
<div class="c" style="left:1474px;top:488.40px;width:94px;color:#000;text-align:right;padding-right:1.5px;">35%</div>
<div class="c" style="left:1569px;top:488.40px;width:94px;color:#000;text-align:right;padding-right:1.5px;">34%</div>
<div class="c" style="left:1664px;top:488.40px;width:94px;color:#000;text-align:right;padding-right:1.5px;">34%</div>
<div class="c" style="left:1759px;top:488.40px;width:94px;color:#000;text-align:right;padding-right:1.5px;">34%</div>
<div class="c" style="left:29px;top:524.40px;width:170px;color:#000;text-align:left;padding-left:1.5px;letter-spacing:-0.2px;overflow:visible;">Chi phí thuê mặt bằng</div>
<div class="c" style="left:200px;top:524.40px;width:96px;color:#000;text-align:right;padding-right:6.3px;">30,000,000</div>
<div class="c" style="left:297px;top:524.40px;width:67px;color:#000;text-align:right;padding-right:1.5px;">0%</div>
<div class="c" style="left:365px;top:524.40px;width:87px;color:#000;text-align:right;padding-right:1.5px;">10%</div>
<div class="c" style="left:809px;top:524.40px;width:94px;color:#000;text-align:right;padding-right:6.3px;">15,000,000</div>
<div class="c" style="left:809px;top:542.40px;width:94px;color:#000;text-align:right;padding-right:1.5px;">-50%</div>
<div class="c" style="left:904px;top:524.40px;width:94px;color:#000;text-align:right;padding-right:6.3px;">18,000,000</div>
<div class="c" style="left:904px;top:542.40px;width:94px;color:#000;text-align:right;padding-right:1.5px;">-40%</div>
<div class="c" style="left:999px;top:524.40px;width:94px;color:#000;text-align:right;padding-right:6.3px;">21,000,000</div>
<div class="c" style="left:999px;top:542.40px;width:94px;color:#000;text-align:right;padding-right:1.5px;">-30%</div>
<div class="c" style="left:1094px;top:524.40px;width:94px;color:#000;text-align:right;padding-right:6.3px;">24,000,000</div>
<div class="c" style="left:1094px;top:542.40px;width:94px;color:#000;text-align:right;padding-right:1.5px;">-20%</div>
<div class="c" style="left:1189px;top:524.40px;width:94px;color:#000;text-align:right;padding-right:6.3px;">27,000,000</div>
<div class="c" style="left:1189px;top:542.40px;width:94px;color:#000;text-align:right;padding-right:1.5px;">-10%</div>
<div class="c" style="left:1284px;top:524.40px;width:94px;color:#000;text-align:right;padding-right:6.3px;">30,000,000</div>
<div class="c" style="left:1284px;top:542.40px;width:94px;color:#000;text-align:right;padding-right:1.5px;">0%</div>
<div class="c" style="left:1379px;top:524.40px;width:94px;color:#000;text-align:right;padding-right:6.3px;">33,000,000</div>
<div class="c" style="left:1379px;top:542.40px;width:94px;color:#000;text-align:right;padding-right:1.5px;">10%</div>
<div class="c" style="left:1474px;top:524.40px;width:94px;color:#000;text-align:right;padding-right:6.3px;">36,000,000</div>
<div class="c" style="left:1474px;top:542.40px;width:94px;color:#000;text-align:right;padding-right:1.5px;">20%</div>
<div class="c" style="left:1569px;top:524.40px;width:94px;color:#000;text-align:right;padding-right:6.3px;">39,000,000</div>
<div class="c" style="left:1569px;top:542.40px;width:94px;color:#000;text-align:right;padding-right:1.5px;">30%</div>
<div class="c" style="left:1664px;top:524.40px;width:94px;color:#000;text-align:right;padding-right:6.3px;">42,000,000</div>
<div class="c" style="left:1664px;top:542.40px;width:94px;color:#000;text-align:right;padding-right:1.5px;">40%</div>
<div class="c" style="left:1759px;top:524.40px;width:94px;color:#000;text-align:right;padding-right:6.3px;">45,000,000</div>
<div class="c" style="left:1759px;top:542.40px;width:94px;color:#000;text-align:right;padding-right:1.5px;">50%</div>
<div class="c" style="left:200px;top:622.90px;width:96px;color:#000;text-align:center;letter-spacing:-0.2px;font-weight:bold;">Điều kiện</div>
<div class="c" style="left:297px;top:560.40px;width:67px;color:#000;text-align:right;padding-right:1.5px;">&gt;=</div>
<div class="c" style="left:365px;top:560.40px;width:87px;color:#000;text-align:right;padding-right:1.5px;">36</div>
<div class="c" style="left:453px;top:560.40px;width:257px;color:#000;text-align:left;padding-left:1.5px;letter-spacing:-0.2px;">Thời gian hoàn vốn</div>
<div class="c" style="left:711px;top:560.40px;width:97px;color:#ff0000;font-weight:bold;text-align:right;padding-right:6.3px;">35.0</div>
<div class="c" style="left:809px;top:560.40px;width:94px;color:#ff0000;font-weight:bold;text-align:right;padding-right:6.3px;">26.8</div>
<div class="c" style="left:904px;top:560.40px;width:94px;color:#ff0000;font-weight:bold;text-align:right;padding-right:6.3px;">28.1</div>
<div class="c" style="left:999px;top:560.40px;width:94px;color:#ff0000;font-weight:bold;text-align:right;padding-right:6.3px;">29.6</div>
<div class="c" style="left:1094px;top:560.40px;width:94px;color:#ff0000;font-weight:bold;text-align:right;padding-right:6.3px;">31.2</div>
<div class="c" style="left:1189px;top:560.40px;width:94px;color:#ff0000;font-weight:bold;text-align:right;padding-right:6.3px;">33.0</div>
<div class="c" style="left:1284px;top:560.40px;width:94px;color:#ff0000;font-weight:bold;text-align:right;padding-right:6.3px;">35.0</div>
<div class="c" style="left:1379px;top:560.40px;width:94px;color:#9c0006;font-weight:bold;text-align:right;padding-right:6.3px;">37.3</div>
<div class="c" style="left:1474px;top:560.40px;width:94px;color:#9c0006;font-weight:bold;text-align:right;padding-right:6.3px;">39.8</div>
<div class="c" style="left:1569px;top:560.40px;width:94px;color:#9c0006;font-weight:bold;text-align:right;padding-right:6.3px;">42.7</div>
<div class="c" style="left:1664px;top:560.40px;width:94px;color:#9c0006;font-weight:bold;text-align:right;padding-right:6.3px;">46.0</div>
<div class="c" style="left:1759px;top:560.40px;width:94px;color:#9c0006;font-weight:bold;text-align:right;padding-right:6.3px;">49.9</div>
<div class="c" style="left:453px;top:578.40px;width:257px;color:#000;text-align:left;padding-left:1.5px;letter-spacing:-0.2px;">Doanh thu hòa vốn/ 1 đơn vị thời gian</div>
<div class="c" style="left:711px;top:578.40px;width:97px;color:#000;text-align:right;padding-right:6.3px;">89,204,976</div>
<div class="c" style="left:809px;top:578.40px;width:94px;color:#000;text-align:right;padding-right:6.3px;">68,099,687</div>
<div class="c" style="left:904px;top:578.40px;width:94px;color:#000;text-align:right;padding-right:6.3px;">72,320,745</div>
<div class="c" style="left:999px;top:578.40px;width:94px;color:#000;text-align:right;padding-right:6.3px;">76,541,803</div>
<div class="c" style="left:1094px;top:578.40px;width:94px;color:#000;text-align:right;padding-right:6.3px;">80,762,860</div>
<div class="c" style="left:1189px;top:578.40px;width:94px;color:#000;text-align:right;padding-right:6.3px;">84,983,918</div>
<div class="c" style="left:1284px;top:578.40px;width:94px;color:#000;text-align:right;padding-right:6.3px;">89,204,976</div>
<div class="c" style="left:1379px;top:578.40px;width:94px;color:#000;text-align:right;padding-right:6.3px;">93,426,034</div>
<div class="c" style="left:1474px;top:578.40px;width:94px;color:#000;text-align:right;padding-right:6.3px;">97,647,092</div>
<div class="c" style="left:1569px;top:578.40px;width:94px;color:#000;text-align:right;padding-right:6.3px;">101,868,149</div>
<div class="c" style="left:1664px;top:578.40px;width:94px;color:#000;text-align:right;padding-right:6.3px;">106,089,207</div>
<div class="c" style="left:1759px;top:578.40px;width:94px;color:#000;text-align:right;padding-right:6.3px;">110,310,265</div>
<div class="c" style="left:453px;top:596.40px;width:257px;color:#000;text-align:left;padding-left:1.5px;letter-spacing:-0.2px;">Số khách tập 1 tháng hòa vốn</div>
<div class="c" style="left:711px;top:596.40px;width:97px;color:#000;text-align:right;padding-right:6.3px;">41</div>
<div class="c" style="left:809px;top:596.40px;width:94px;color:#000;text-align:right;padding-right:6.3px;">31</div>
<div class="c" style="left:904px;top:596.40px;width:94px;color:#000;text-align:right;padding-right:6.3px;">33</div>
<div class="c" style="left:999px;top:596.40px;width:94px;color:#000;text-align:right;padding-right:6.3px;">35</div>
<div class="c" style="left:1094px;top:596.40px;width:94px;color:#000;text-align:right;padding-right:6.3px;">37</div>
<div class="c" style="left:1189px;top:596.40px;width:94px;color:#000;text-align:right;padding-right:6.3px;">39</div>
<div class="c" style="left:1284px;top:596.40px;width:94px;color:#000;text-align:right;padding-right:6.3px;">41</div>
<div class="c" style="left:1379px;top:596.40px;width:94px;color:#000;text-align:right;padding-right:6.3px;">42</div>
<div class="c" style="left:1474px;top:596.40px;width:94px;color:#000;text-align:right;padding-right:6.3px;">44</div>
<div class="c" style="left:1569px;top:596.40px;width:94px;color:#000;text-align:right;padding-right:6.3px;">46</div>
<div class="c" style="left:1664px;top:596.40px;width:94px;color:#000;text-align:right;padding-right:6.3px;">48</div>
<div class="c" style="left:1759px;top:596.40px;width:94px;color:#000;text-align:right;padding-right:6.3px;">50</div>
<div class="c" style="left:297px;top:614.40px;width:67px;color:#000;text-align:right;padding-right:1.5px;">&gt;=</div>
<div class="c" style="left:365px;top:614.40px;width:87px;color:#000;text-align:right;padding-right:6.3px;">10,000,000</div>
<div class="c" style="left:453px;top:614.40px;width:257px;color:#000;text-align:left;padding-left:1.5px;letter-spacing:-0.2px;">Thu nhập ròng bình quân 1 tháng</div>
<div class="c" style="left:711px;top:614.40px;width:97px;color:#000;text-align:right;padding-right:6.3px;">46,546,857</div>
<div class="c" style="left:809px;top:614.40px;width:94px;color:#000;text-align:right;padding-right:6.3px;">62,847,138</div>
<div class="c" style="left:904px;top:614.40px;width:94px;color:#000;text-align:right;padding-right:6.3px;">59,587,082</div>
<div class="c" style="left:999px;top:614.40px;width:94px;color:#000;text-align:right;padding-right:6.3px;">56,327,026</div>
<div class="c" style="left:1094px;top:614.40px;width:94px;color:#000;text-align:right;padding-right:6.3px;">53,066,969</div>
<div class="c" style="left:1189px;top:614.40px;width:94px;color:#000;text-align:right;padding-right:6.3px;">49,806,913</div>
<div class="c" style="left:1284px;top:614.40px;width:94px;color:#000;text-align:right;padding-right:6.3px;">46,546,857</div>
<div class="c" style="left:1379px;top:614.40px;width:94px;color:#000;text-align:right;padding-right:6.3px;">43,286,801</div>
<div class="c" style="left:1474px;top:614.40px;width:94px;color:#000;text-align:right;padding-right:6.3px;">40,026,744</div>
<div class="c" style="left:1569px;top:614.40px;width:94px;color:#000;text-align:right;padding-right:6.3px;">36,766,688</div>
<div class="c" style="left:1664px;top:614.40px;width:94px;color:#000;text-align:right;padding-right:6.3px;">33,506,632</div>
<div class="c" style="left:1759px;top:614.40px;width:94px;color:#000;text-align:right;padding-right:6.3px;">30,246,576</div>
<div class="c" style="left:297px;top:632.40px;width:67px;color:#000;text-align:right;padding-right:1.5px;">&gt;=</div>
<div class="c" style="left:365px;top:632.40px;width:87px;color:#000;text-align:right;padding-right:1.5px;">12%</div>
<div class="c" style="left:453px;top:632.40px;width:257px;color:#000;text-align:left;padding-left:1.5px;letter-spacing:-0.2px;">IRR</div>
<div class="c" style="left:711px;top:632.40px;width:97px;color:#000;text-align:right;padding-right:1.5px;">40%</div>
<div class="c" style="left:809px;top:632.40px;width:94px;color:#000;text-align:right;padding-right:1.5px;">75%</div>
<div class="c" style="left:904px;top:632.40px;width:94px;color:#000;text-align:right;padding-right:1.5px;">67%</div>
<div class="c" style="left:999px;top:632.40px;width:94px;color:#000;text-align:right;padding-right:1.5px;">60%</div>
<div class="c" style="left:1094px;top:632.40px;width:94px;color:#000;text-align:right;padding-right:1.5px;">53%</div>
<div class="c" style="left:1189px;top:632.40px;width:94px;color:#000;text-align:right;padding-right:1.5px;">46%</div>
<div class="c" style="left:1284px;top:632.40px;width:94px;color:#000;text-align:right;padding-right:1.5px;">40%</div>
<div class="c" style="left:1379px;top:632.40px;width:94px;color:#000;text-align:right;padding-right:1.5px;">34%</div>
<div class="c" style="left:1474px;top:632.40px;width:94px;color:#000;text-align:right;padding-right:1.5px;">28%</div>
<div class="c" style="left:1569px;top:632.40px;width:94px;color:#000;text-align:right;padding-right:1.5px;">22%</div>
<div class="c" style="left:1664px;top:632.40px;width:94px;color:#000;text-align:right;padding-right:1.5px;">17%</div>
<div class="c" style="left:1759px;top:632.40px;width:94px;color:#9c0006;text-align:right;padding-right:1.5px;">11%</div>
<div class="c" style="left:297px;top:650.40px;width:67px;color:#000;text-align:right;padding-right:1.5px;">&gt;=</div>
<div class="c" style="left:365px;top:650.40px;width:87px;color:#000;text-align:right;padding-right:1.5px;">20%</div>
<div class="c" style="left:453px;top:650.40px;width:257px;color:#000;text-align:left;padding-left:1.5px;letter-spacing:-0.2px;">ROE (Lợi nhuận BQ 1 năm/Vốn chủ sở hữu)</div>
<div class="c" style="left:711px;top:650.40px;width:97px;color:#000;text-align:right;padding-right:1.5px;">61%</div>
<div class="c" style="left:809px;top:650.40px;width:94px;color:#000;text-align:right;padding-right:1.5px;">83%</div>
<div class="c" style="left:904px;top:650.40px;width:94px;color:#000;text-align:right;padding-right:1.5px;">79%</div>
<div class="c" style="left:999px;top:650.40px;width:94px;color:#000;text-align:right;padding-right:1.5px;">74%</div>
<div class="c" style="left:1094px;top:650.40px;width:94px;color:#000;text-align:right;padding-right:1.5px;">70%</div>
<div class="c" style="left:1189px;top:650.40px;width:94px;color:#000;text-align:right;padding-right:1.5px;">65%</div>
<div class="c" style="left:1284px;top:650.40px;width:94px;color:#000;text-align:right;padding-right:1.5px;">61%</div>
<div class="c" style="left:1379px;top:650.40px;width:94px;color:#000;text-align:right;padding-right:1.5px;">56%</div>
<div class="c" style="left:1474px;top:650.40px;width:94px;color:#000;text-align:right;padding-right:1.5px;">52%</div>
<div class="c" style="left:1569px;top:650.40px;width:94px;color:#000;text-align:right;padding-right:1.5px;">47%</div>
<div class="c" style="left:1664px;top:650.40px;width:94px;color:#000;text-align:right;padding-right:1.5px;">43%</div>
<div class="c" style="left:1759px;top:650.40px;width:94px;color:#000;text-align:right;padding-right:1.5px;">39%</div>
<div class="c" style="left:297px;top:668.40px;width:67px;color:#000;text-align:right;padding-right:1.5px;">&gt;=</div>
<div class="c" style="left:365px;top:668.40px;width:87px;color:#000;text-align:right;padding-right:1.5px;">5%</div>
<div class="c" style="left:453px;top:668.40px;width:257px;color:#000;text-align:left;padding-left:1.5px;letter-spacing:-0.2px;">ROI (Lợi nhuận BQ 1 năm/Tổng vốn đầu tư)</div>
<div class="c" style="left:711px;top:668.40px;width:97px;color:#000;text-align:right;padding-right:1.5px;">42%</div>
<div class="c" style="left:809px;top:668.40px;width:94px;color:#000;text-align:right;padding-right:1.5px;">58%</div>
<div class="c" style="left:904px;top:668.40px;width:94px;color:#000;text-align:right;padding-right:1.5px;">55%</div>
<div class="c" style="left:999px;top:668.40px;width:94px;color:#000;text-align:right;padding-right:1.5px;">52%</div>
<div class="c" style="left:1094px;top:668.40px;width:94px;color:#000;text-align:right;padding-right:1.5px;">49%</div>
<div class="c" style="left:1189px;top:668.40px;width:94px;color:#000;text-align:right;padding-right:1.5px;">45%</div>
<div class="c" style="left:1284px;top:668.40px;width:94px;color:#000;text-align:right;padding-right:1.5px;">42%</div>
<div class="c" style="left:1379px;top:668.40px;width:94px;color:#000;text-align:right;padding-right:1.5px;">39%</div>
<div class="c" style="left:1474px;top:668.40px;width:94px;color:#000;text-align:right;padding-right:1.5px;">36%</div>
<div class="c" style="left:1569px;top:668.40px;width:94px;color:#000;text-align:right;padding-right:1.5px;">33%</div>
<div class="c" style="left:1664px;top:668.40px;width:94px;color:#000;text-align:right;padding-right:1.5px;">30%</div>
<div class="c" style="left:1759px;top:668.40px;width:94px;color:#000;text-align:right;padding-right:1.5px;">27%</div>
<div class="c" style="left:297px;top:686.40px;width:67px;color:#000;text-align:right;padding-right:1.5px;">&gt;=</div>
<div class="c" style="left:365px;top:686.40px;width:87px;color:#000;text-align:right;padding-right:1.5px;">5%</div>
<div class="c" style="left:453px;top:686.40px;width:257px;color:#000;text-align:left;padding-left:1.5px;letter-spacing:-0.2px;">ROS (Lợi nhuận BQ 1 năm/Doanh thu)</div>
<div class="c" style="left:711px;top:686.40px;width:97px;color:#000;text-align:right;padding-right:1.5px;">35%</div>
<div class="c" style="left:809px;top:686.40px;width:94px;color:#000;text-align:right;padding-right:1.5px;">47%</div>
<div class="c" style="left:904px;top:686.40px;width:94px;color:#000;text-align:right;padding-right:1.5px;">45%</div>
<div class="c" style="left:999px;top:686.40px;width:94px;color:#000;text-align:right;padding-right:1.5px;">42%</div>
<div class="c" style="left:1094px;top:686.40px;width:94px;color:#000;text-align:right;padding-right:1.5px;">40%</div>
<div class="c" style="left:1189px;top:686.40px;width:94px;color:#000;text-align:right;padding-right:1.5px;">37%</div>
<div class="c" style="left:1284px;top:686.40px;width:94px;color:#000;text-align:right;padding-right:1.5px;">35%</div>
<div class="c" style="left:1379px;top:686.40px;width:94px;color:#000;text-align:right;padding-right:1.5px;">33%</div>
<div class="c" style="left:1474px;top:686.40px;width:94px;color:#000;text-align:right;padding-right:1.5px;">30%</div>
<div class="c" style="left:1569px;top:686.40px;width:94px;color:#000;text-align:right;padding-right:1.5px;">28%</div>
<div class="c" style="left:1664px;top:686.40px;width:94px;color:#000;text-align:right;padding-right:1.5px;">25%</div>
<div class="c" style="left:1759px;top:686.40px;width:94px;color:#000;text-align:right;padding-right:1.5px;">23%</div>
<div class="c" style="left:29px;top:722.40px;width:170px;color:#000;text-align:left;padding-left:1.5px;letter-spacing:-0.2px;overflow:visible;">Lương cố định</div>
<div class="c" style="left:200px;top:722.40px;width:96px;color:#000;text-align:right;padding-right:6.3px;">24,000,000</div>
<div class="c" style="left:297px;top:722.40px;width:67px;color:#000;text-align:right;padding-right:1.5px;">0%</div>
<div class="c" style="left:365px;top:722.40px;width:87px;color:#000;text-align:right;padding-right:1.5px;">10%</div>
<div class="c" style="left:809px;top:722.40px;width:94px;color:#000;text-align:right;padding-right:6.3px;">12,000,000</div>
<div class="c" style="left:809px;top:740.40px;width:94px;color:#000;text-align:right;padding-right:1.5px;">-50%</div>
<div class="c" style="left:904px;top:722.40px;width:94px;color:#000;text-align:right;padding-right:6.3px;">14,400,000</div>
<div class="c" style="left:904px;top:740.40px;width:94px;color:#000;text-align:right;padding-right:1.5px;">-40%</div>
<div class="c" style="left:999px;top:722.40px;width:94px;color:#000;text-align:right;padding-right:6.3px;">16,800,000</div>
<div class="c" style="left:999px;top:740.40px;width:94px;color:#000;text-align:right;padding-right:1.5px;">-30%</div>
<div class="c" style="left:1094px;top:722.40px;width:94px;color:#000;text-align:right;padding-right:6.3px;">19,200,000</div>
<div class="c" style="left:1094px;top:740.40px;width:94px;color:#000;text-align:right;padding-right:1.5px;">-20%</div>
<div class="c" style="left:1189px;top:722.40px;width:94px;color:#000;text-align:right;padding-right:6.3px;">21,600,000</div>
<div class="c" style="left:1189px;top:740.40px;width:94px;color:#000;text-align:right;padding-right:1.5px;">-10%</div>
<div class="c" style="left:1284px;top:722.40px;width:94px;color:#000;text-align:right;padding-right:6.3px;">24,000,000</div>
<div class="c" style="left:1284px;top:740.40px;width:94px;color:#000;text-align:right;padding-right:1.5px;">0%</div>
<div class="c" style="left:1379px;top:722.40px;width:94px;color:#000;text-align:right;padding-right:6.3px;">26,400,000</div>
<div class="c" style="left:1379px;top:740.40px;width:94px;color:#000;text-align:right;padding-right:1.5px;">10%</div>
<div class="c" style="left:1474px;top:722.40px;width:94px;color:#000;text-align:right;padding-right:6.3px;">28,800,000</div>
<div class="c" style="left:1474px;top:740.40px;width:94px;color:#000;text-align:right;padding-right:1.5px;">20%</div>
<div class="c" style="left:1569px;top:722.40px;width:94px;color:#000;text-align:right;padding-right:6.3px;">31,200,000</div>
<div class="c" style="left:1569px;top:740.40px;width:94px;color:#000;text-align:right;padding-right:1.5px;">30%</div>
<div class="c" style="left:1664px;top:722.40px;width:94px;color:#000;text-align:right;padding-right:6.3px;">33,600,000</div>
<div class="c" style="left:1664px;top:740.40px;width:94px;color:#000;text-align:right;padding-right:1.5px;">40%</div>
<div class="c" style="left:1759px;top:722.40px;width:94px;color:#000;text-align:right;padding-right:6.3px;">36,000,000</div>
<div class="c" style="left:1759px;top:740.40px;width:94px;color:#000;text-align:right;padding-right:1.5px;">50%</div>
<div class="c" style="left:200px;top:820.90px;width:96px;color:#000;text-align:center;letter-spacing:-0.2px;font-weight:bold;">Điều kiện</div>
<div class="c" style="left:297px;top:758.40px;width:67px;color:#000;text-align:right;padding-right:1.5px;">&gt;=</div>
<div class="c" style="left:365px;top:758.40px;width:87px;color:#000;text-align:right;padding-right:1.5px;">36</div>
<div class="c" style="left:453px;top:758.40px;width:257px;color:#000;text-align:left;padding-left:1.5px;letter-spacing:-0.2px;">Thời gian hoàn vốn</div>
<div class="c" style="left:711px;top:758.40px;width:97px;color:#ff0000;font-weight:bold;text-align:right;padding-right:6.3px;">35.0</div>
<div class="c" style="left:809px;top:758.40px;width:94px;color:#ff0000;font-weight:bold;text-align:right;padding-right:6.3px;">28.6</div>
<div class="c" style="left:904px;top:758.40px;width:94px;color:#ff0000;font-weight:bold;text-align:right;padding-right:6.3px;">29.7</div>
<div class="c" style="left:999px;top:758.40px;width:94px;color:#ff0000;font-weight:bold;text-align:right;padding-right:6.3px;">30.9</div>
<div class="c" style="left:1094px;top:758.40px;width:94px;color:#ff0000;font-weight:bold;text-align:right;padding-right:6.3px;">32.1</div>
<div class="c" style="left:1189px;top:758.40px;width:94px;color:#ff0000;font-weight:bold;text-align:right;padding-right:6.3px;">33.5</div>
<div class="c" style="left:1284px;top:758.40px;width:94px;color:#ff0000;font-weight:bold;text-align:right;padding-right:6.3px;">35.0</div>
<div class="c" style="left:1379px;top:758.40px;width:94px;color:#9c0006;font-weight:bold;text-align:right;padding-right:6.3px;">36.7</div>
<div class="c" style="left:1474px;top:758.40px;width:94px;color:#9c0006;font-weight:bold;text-align:right;padding-right:6.3px;">38.5</div>
<div class="c" style="left:1569px;top:758.40px;width:94px;color:#9c0006;font-weight:bold;text-align:right;padding-right:6.3px;">40.4</div>
<div class="c" style="left:1664px;top:758.40px;width:94px;color:#9c0006;font-weight:bold;text-align:right;padding-right:6.3px;">42.7</div>
<div class="c" style="left:1759px;top:758.40px;width:94px;color:#9c0006;font-weight:bold;text-align:right;padding-right:6.3px;">45.2</div>
<div class="c" style="left:453px;top:776.40px;width:257px;color:#000;text-align:left;padding-left:1.5px;letter-spacing:-0.2px;">Doanh thu hòa vốn/ 1 đơn vị thời gian</div>
<div class="c" style="left:711px;top:776.40px;width:97px;color:#000;text-align:right;padding-right:6.3px;">89,204,976</div>
<div class="c" style="left:809px;top:776.40px;width:94px;color:#000;text-align:right;padding-right:6.3px;">72,827,805</div>
<div class="c" style="left:904px;top:776.40px;width:94px;color:#000;text-align:right;padding-right:6.3px;">76,103,239</div>
<div class="c" style="left:999px;top:776.40px;width:94px;color:#000;text-align:right;padding-right:6.3px;">79,378,673</div>
<div class="c" style="left:1094px;top:776.40px;width:94px;color:#000;text-align:right;padding-right:6.3px;">82,654,107</div>
<div class="c" style="left:1189px;top:776.40px;width:94px;color:#000;text-align:right;padding-right:6.3px;">85,929,542</div>
<div class="c" style="left:1284px;top:776.40px;width:94px;color:#000;text-align:right;padding-right:6.3px;">89,204,976</div>
<div class="c" style="left:1379px;top:776.40px;width:94px;color:#000;text-align:right;padding-right:6.3px;">92,480,410</div>
<div class="c" style="left:1474px;top:776.40px;width:94px;color:#000;text-align:right;padding-right:6.3px;">95,755,844</div>
<div class="c" style="left:1569px;top:776.40px;width:94px;color:#000;text-align:right;padding-right:6.3px;">99,031,279</div>
<div class="c" style="left:1664px;top:776.40px;width:94px;color:#000;text-align:right;padding-right:6.3px;">102,306,713</div>
<div class="c" style="left:1759px;top:776.40px;width:94px;color:#000;text-align:right;padding-right:6.3px;">105,582,147</div>
<div class="c" style="left:453px;top:794.40px;width:257px;color:#000;text-align:left;padding-left:1.5px;letter-spacing:-0.2px;">Số khách tập 1 tháng hòa vốn</div>
<div class="c" style="left:711px;top:794.40px;width:97px;color:#000;text-align:right;padding-right:6.3px;">41</div>
<div class="c" style="left:809px;top:794.40px;width:94px;color:#000;text-align:right;padding-right:6.3px;">33</div>
<div class="c" style="left:904px;top:794.40px;width:94px;color:#000;text-align:right;padding-right:6.3px;">35</div>
<div class="c" style="left:999px;top:794.40px;width:94px;color:#000;text-align:right;padding-right:6.3px;">36</div>
<div class="c" style="left:1094px;top:794.40px;width:94px;color:#000;text-align:right;padding-right:6.3px;">38</div>
<div class="c" style="left:1189px;top:794.40px;width:94px;color:#000;text-align:right;padding-right:6.3px;">39</div>
<div class="c" style="left:1284px;top:794.40px;width:94px;color:#000;text-align:right;padding-right:6.3px;">41</div>
<div class="c" style="left:1379px;top:794.40px;width:94px;color:#000;text-align:right;padding-right:6.3px;">42</div>
<div class="c" style="left:1474px;top:794.40px;width:94px;color:#000;text-align:right;padding-right:6.3px;">44</div>
<div class="c" style="left:1569px;top:794.40px;width:94px;color:#000;text-align:right;padding-right:6.3px;">45</div>
<div class="c" style="left:1664px;top:794.40px;width:94px;color:#000;text-align:right;padding-right:6.3px;">47</div>
<div class="c" style="left:1759px;top:794.40px;width:94px;color:#000;text-align:right;padding-right:6.3px;">48</div>
<div class="c" style="left:297px;top:812.40px;width:67px;color:#000;text-align:right;padding-right:1.5px;">&gt;=</div>
<div class="c" style="left:365px;top:812.40px;width:87px;color:#000;text-align:right;padding-right:6.3px;">10,000,000</div>
<div class="c" style="left:453px;top:812.40px;width:257px;color:#000;text-align:left;padding-left:1.5px;letter-spacing:-0.2px;">Thu nhập ròng bình quân 1 tháng</div>
<div class="c" style="left:711px;top:812.40px;width:97px;color:#000;text-align:right;padding-right:6.3px;">46,546,857</div>
<div class="c" style="left:809px;top:812.40px;width:94px;color:#000;text-align:right;padding-right:6.3px;">59,408,372</div>
<div class="c" style="left:904px;top:812.40px;width:94px;color:#000;text-align:right;padding-right:6.3px;">56,836,069</div>
<div class="c" style="left:999px;top:812.40px;width:94px;color:#000;text-align:right;padding-right:6.3px;">54,263,766</div>
<div class="c" style="left:1094px;top:812.40px;width:94px;color:#000;text-align:right;padding-right:6.3px;">51,691,463</div>
<div class="c" style="left:1189px;top:812.40px;width:94px;color:#000;text-align:right;padding-right:6.3px;">49,119,160</div>
<div class="c" style="left:1284px;top:812.40px;width:94px;color:#000;text-align:right;padding-right:6.3px;">46,546,857</div>
<div class="c" style="left:1379px;top:812.40px;width:94px;color:#000;text-align:right;padding-right:6.3px;">43,974,554</div>
<div class="c" style="left:1474px;top:812.40px;width:94px;color:#000;text-align:right;padding-right:6.3px;">41,402,251</div>
<div class="c" style="left:1569px;top:812.40px;width:94px;color:#000;text-align:right;padding-right:6.3px;">38,829,948</div>
<div class="c" style="left:1664px;top:812.40px;width:94px;color:#000;text-align:right;padding-right:6.3px;">36,257,645</div>
<div class="c" style="left:1759px;top:812.40px;width:94px;color:#000;text-align:right;padding-right:6.3px;">33,685,342</div>
<div class="c" style="left:297px;top:830.40px;width:67px;color:#000;text-align:right;padding-right:1.5px;">&gt;=</div>
<div class="c" style="left:365px;top:830.40px;width:87px;color:#000;text-align:right;padding-right:1.5px;">12%</div>
<div class="c" style="left:453px;top:830.40px;width:257px;color:#000;text-align:left;padding-left:1.5px;letter-spacing:-0.2px;">IRR</div>
<div class="c" style="left:711px;top:830.40px;width:97px;color:#000;text-align:right;padding-right:1.5px;">40%</div>
<div class="c" style="left:809px;top:830.40px;width:94px;color:#000;text-align:right;padding-right:1.5px;">64%</div>
<div class="c" style="left:904px;top:830.40px;width:94px;color:#000;text-align:right;padding-right:1.5px;">59%</div>
<div class="c" style="left:999px;top:830.40px;width:94px;color:#000;text-align:right;padding-right:1.5px;">54%</div>
<div class="c" style="left:1094px;top:830.40px;width:94px;color:#000;text-align:right;padding-right:1.5px;">49%</div>
<div class="c" style="left:1189px;top:830.40px;width:94px;color:#000;text-align:right;padding-right:1.5px;">44%</div>
<div class="c" style="left:1284px;top:830.40px;width:94px;color:#000;text-align:right;padding-right:1.5px;">40%</div>
<div class="c" style="left:1379px;top:830.40px;width:94px;color:#000;text-align:right;padding-right:1.5px;">35%</div>
<div class="c" style="left:1474px;top:830.40px;width:94px;color:#000;text-align:right;padding-right:1.5px;">31%</div>
<div class="c" style="left:1569px;top:830.40px;width:94px;color:#000;text-align:right;padding-right:1.5px;">27%</div>
<div class="c" style="left:1664px;top:830.40px;width:94px;color:#000;text-align:right;padding-right:1.5px;">22%</div>
<div class="c" style="left:1759px;top:830.40px;width:94px;color:#000;text-align:right;padding-right:1.5px;">18%</div>
<div class="c" style="left:297px;top:848.40px;width:67px;color:#000;text-align:right;padding-right:1.5px;">&gt;=</div>
<div class="c" style="left:365px;top:848.40px;width:87px;color:#000;text-align:right;padding-right:1.5px;">20%</div>
<div class="c" style="left:453px;top:848.40px;width:257px;color:#000;text-align:left;padding-left:1.5px;letter-spacing:-0.2px;">ROE (Lợi nhuận BQ 1 năm/Vốn chủ sở hữu)</div>
<div class="c" style="left:711px;top:848.40px;width:97px;color:#000;text-align:right;padding-right:1.5px;">61%</div>
<div class="c" style="left:809px;top:848.40px;width:94px;color:#000;text-align:right;padding-right:1.5px;">77%</div>
<div class="c" style="left:904px;top:848.40px;width:94px;color:#000;text-align:right;padding-right:1.5px;">74%</div>
<div class="c" style="left:999px;top:848.40px;width:94px;color:#000;text-align:right;padding-right:1.5px;">70%</div>
<div class="c" style="left:1094px;top:848.40px;width:94px;color:#000;text-align:right;padding-right:1.5px;">67%</div>
<div class="c" style="left:1189px;top:848.40px;width:94px;color:#000;text-align:right;padding-right:1.5px;">64%</div>
<div class="c" style="left:1284px;top:848.40px;width:94px;color:#000;text-align:right;padding-right:1.5px;">61%</div>
<div class="c" style="left:1379px;top:848.40px;width:94px;color:#000;text-align:right;padding-right:1.5px;">57%</div>
<div class="c" style="left:1474px;top:848.40px;width:94px;color:#000;text-align:right;padding-right:1.5px;">54%</div>
<div class="c" style="left:1569px;top:848.40px;width:94px;color:#000;text-align:right;padding-right:1.5px;">51%</div>
<div class="c" style="left:1664px;top:848.40px;width:94px;color:#000;text-align:right;padding-right:1.5px;">48%</div>
<div class="c" style="left:1759px;top:848.40px;width:94px;color:#000;text-align:right;padding-right:1.5px;">44%</div>
<div class="c" style="left:297px;top:866.40px;width:67px;color:#000;text-align:right;padding-right:1.5px;">&gt;=</div>
<div class="c" style="left:365px;top:866.40px;width:87px;color:#000;text-align:right;padding-right:1.5px;">5%</div>
<div class="c" style="left:453px;top:866.40px;width:257px;color:#000;text-align:left;padding-left:1.5px;letter-spacing:-0.2px;">ROI (Lợi nhuận BQ 1 năm/Tổng vốn đầu tư)</div>
<div class="c" style="left:711px;top:866.40px;width:97px;color:#000;text-align:right;padding-right:1.5px;">42%</div>
<div class="c" style="left:809px;top:866.40px;width:94px;color:#000;text-align:right;padding-right:1.5px;">54%</div>
<div class="c" style="left:904px;top:866.40px;width:94px;color:#000;text-align:right;padding-right:1.5px;">51%</div>
<div class="c" style="left:999px;top:866.40px;width:94px;color:#000;text-align:right;padding-right:1.5px;">49%</div>
<div class="c" style="left:1094px;top:866.40px;width:94px;color:#000;text-align:right;padding-right:1.5px;">47%</div>
<div class="c" style="left:1189px;top:866.40px;width:94px;color:#000;text-align:right;padding-right:1.5px;">45%</div>
<div class="c" style="left:1284px;top:866.40px;width:94px;color:#000;text-align:right;padding-right:1.5px;">42%</div>
<div class="c" style="left:1379px;top:866.40px;width:94px;color:#000;text-align:right;padding-right:1.5px;">40%</div>
<div class="c" style="left:1474px;top:866.40px;width:94px;color:#000;text-align:right;padding-right:1.5px;">38%</div>
<div class="c" style="left:1569px;top:866.40px;width:94px;color:#000;text-align:right;padding-right:1.5px;">35%</div>
<div class="c" style="left:1664px;top:866.40px;width:94px;color:#000;text-align:right;padding-right:1.5px;">33%</div>
<div class="c" style="left:1759px;top:866.40px;width:94px;color:#000;text-align:right;padding-right:1.5px;">31%</div>
<div class="c" style="left:297px;top:884.40px;width:67px;color:#000;text-align:right;padding-right:1.5px;">&gt;=</div>
<div class="c" style="left:365px;top:884.40px;width:87px;color:#000;text-align:right;padding-right:1.5px;">5%</div>
<div class="c" style="left:453px;top:884.40px;width:257px;color:#000;text-align:left;padding-left:1.5px;letter-spacing:-0.2px;">ROS (Lợi nhuận BQ 1 năm/Doanh thu)</div>
<div class="c" style="left:711px;top:884.40px;width:97px;color:#000;text-align:right;padding-right:1.5px;">35%</div>
<div class="c" style="left:809px;top:884.40px;width:94px;color:#000;text-align:right;padding-right:1.5px;">44%</div>
<div class="c" style="left:904px;top:884.40px;width:94px;color:#000;text-align:right;padding-right:1.5px;">43%</div>
<div class="c" style="left:999px;top:884.40px;width:94px;color:#000;text-align:right;padding-right:1.5px;">41%</div>
<div class="c" style="left:1094px;top:884.40px;width:94px;color:#000;text-align:right;padding-right:1.5px;">39%</div>
<div class="c" style="left:1189px;top:884.40px;width:94px;color:#000;text-align:right;padding-right:1.5px;">37%</div>
<div class="c" style="left:1284px;top:884.40px;width:94px;color:#000;text-align:right;padding-right:1.5px;">35%</div>
<div class="c" style="left:1379px;top:884.40px;width:94px;color:#000;text-align:right;padding-right:1.5px;">33%</div>
<div class="c" style="left:1474px;top:884.40px;width:94px;color:#000;text-align:right;padding-right:1.5px;">31%</div>
<div class="c" style="left:1569px;top:884.40px;width:94px;color:#000;text-align:right;padding-right:1.5px;">29%</div>
<div class="c" style="left:1664px;top:884.40px;width:94px;color:#000;text-align:right;padding-right:1.5px;">28%</div>
<div class="c" style="left:1759px;top:884.40px;width:94px;color:#000;text-align:right;padding-right:1.5px;">26%</div>
<div class="c" style="left:29px;top:920.40px;width:170px;color:#000;text-align:left;padding-left:1.5px;letter-spacing:-0.2px;overflow:visible;">Hàng hóa phụ kiện</div>
<div class="c" style="left:200px;top:920.40px;width:96px;color:#000;text-align:right;padding-right:6.3px;">240,000</div>
<div class="c" style="left:297px;top:920.40px;width:67px;color:#000;text-align:right;padding-right:1.5px;">0%</div>
<div class="c" style="left:365px;top:920.40px;width:87px;color:#000;text-align:right;padding-right:1.5px;">10%</div>
<div class="c" style="left:809px;top:920.40px;width:94px;color:#000;text-align:right;padding-right:6.3px;">120,000</div>
<div class="c" style="left:809px;top:938.40px;width:94px;color:#000;text-align:right;padding-right:1.5px;">-50%</div>
<div class="c" style="left:904px;top:920.40px;width:94px;color:#000;text-align:right;padding-right:6.3px;">144,000</div>
<div class="c" style="left:904px;top:938.40px;width:94px;color:#000;text-align:right;padding-right:1.5px;">-40%</div>
<div class="c" style="left:999px;top:920.40px;width:94px;color:#000;text-align:right;padding-right:6.3px;">168,000</div>
<div class="c" style="left:999px;top:938.40px;width:94px;color:#000;text-align:right;padding-right:1.5px;">-30%</div>
<div class="c" style="left:1094px;top:920.40px;width:94px;color:#000;text-align:right;padding-right:6.3px;">192,000</div>
<div class="c" style="left:1094px;top:938.40px;width:94px;color:#000;text-align:right;padding-right:1.5px;">-20%</div>
<div class="c" style="left:1189px;top:920.40px;width:94px;color:#000;text-align:right;padding-right:6.3px;">216,000</div>
<div class="c" style="left:1189px;top:938.40px;width:94px;color:#000;text-align:right;padding-right:1.5px;">-10%</div>
<div class="c" style="left:1284px;top:920.40px;width:94px;color:#000;text-align:right;padding-right:6.3px;">240,000</div>
<div class="c" style="left:1284px;top:938.40px;width:94px;color:#000;text-align:right;padding-right:1.5px;">0%</div>
<div class="c" style="left:1379px;top:920.40px;width:94px;color:#000;text-align:right;padding-right:6.3px;">264,000</div>
<div class="c" style="left:1379px;top:938.40px;width:94px;color:#000;text-align:right;padding-right:1.5px;">10%</div>
<div class="c" style="left:1474px;top:920.40px;width:94px;color:#000;text-align:right;padding-right:6.3px;">288,000</div>
<div class="c" style="left:1474px;top:938.40px;width:94px;color:#000;text-align:right;padding-right:1.5px;">20%</div>
<div class="c" style="left:1569px;top:920.40px;width:94px;color:#000;text-align:right;padding-right:6.3px;">312,000</div>
<div class="c" style="left:1569px;top:938.40px;width:94px;color:#000;text-align:right;padding-right:1.5px;">30%</div>
<div class="c" style="left:1664px;top:920.40px;width:94px;color:#000;text-align:right;padding-right:6.3px;">336,000</div>
<div class="c" style="left:1664px;top:938.40px;width:94px;color:#000;text-align:right;padding-right:1.5px;">40%</div>
<div class="c" style="left:1759px;top:920.40px;width:94px;color:#000;text-align:right;padding-right:6.3px;">360,000</div>
<div class="c" style="left:1759px;top:938.40px;width:94px;color:#000;text-align:right;padding-right:1.5px;">50%</div>
<svg width="7" height="7" style="left:446px;top:361px" viewBox="0 0 7 7"><path d="M0 0 H6 V6 Z" fill="#ff0000"/></svg>
<div class="a" style="left:807px;top:431px;width:98px;height:21px;border:2px solid #217346"></div>
<div class="a" style="left:899px;top:446px;width:8px;height:8px;background:#fff"></div>
<div class="a" style="left:900px;top:447px;width:6px;height:6px;background:#217346"></div>
<div class="a" style="left:1890px;top:269px;width:30px;height:685px;background:#e6e6e6"></div>
<div class="a" style="left:1892px;top:295px;width:25px;height:634px;background:#f0f0f0"></div>
<div class="a" style="left:1892px;top:270px;width:25px;height:25px;background:#fff;border:1px solid #aaa"></div>
<svg width="12" height="8" style="left:1898.5px;top:278px" viewBox="0 0 12 8"><path d="M0.5 7 L6 1 L11.5 7 Z" fill="#222"/></svg>
<div class="a" style="left:1892px;top:294px;width:25px;height:515px;background:#fff;border:1px solid #aaa;border-top:2px solid #aaa"></div>
<div class="a" style="left:1892px;top:929px;width:25px;height:25px;background:#fff;border:1px solid #aaa"></div>
<svg width="12" height="8" style="left:1899px;top:938px" viewBox="0 0 12 8"><path d="M0.5 1 L6 7 L11.5 1 Z" fill="#333"/></svg>
<div class="a" style="left:0px;top:954px;width:1920px;height:33px;background:#e6e6e6"></div>
<div class="a" style="left:0px;top:987px;width:1920px;height:1px;background:#d0d0d0"></div>
<svg width="10" height="14" style="left:28px;top:962px" viewBox="0 0 10 14"><path d="M8 1 L2 7 L8 13 Z" fill="#c8c8c8"/></svg>
<svg width="10" height="14" style="left:62px;top:962px" viewBox="0 0 10 14"><path d="M2 1 L8 7 L2 13 Z" fill="#c8c8c8"/></svg>
<div class="a" style="left:118px;top:957px;width:1px;height:26px;background:#a8a8a8"></div>
<div class="t" style="left:135.00px;top:959.00px;font-size:19.1px;color:#444;font-weight:normal;letter-spacing:0.250px;font-family:'Liberation Sans',sans-serif;">Tóm tắt KQKD</div>
<div class="a" style="left:279px;top:957px;width:1px;height:26px;background:#a8a8a8"></div>
<div class="t" style="left:294.75px;top:959.00px;font-size:19.1px;color:#444;font-weight:normal;letter-spacing:0.312px;font-family:'Liberation Sans',sans-serif;">Diện tích</div>
<div class="a" style="left:389px;top:957px;width:1px;height:26px;background:#a8a8a8"></div>
<div class="t" style="left:407.00px;top:959.00px;font-size:19.1px;color:#444;font-weight:normal;letter-spacing:0.286px;font-family:'Liberation Sans',sans-serif;">Tổng vốn đầu tư</div>
<div class="a" style="left:571px;top:957px;width:1px;height:26px;background:#a8a8a8"></div>
<div class="t" style="left:590.00px;top:959.00px;font-size:19.1px;color:#444;font-weight:normal;letter-spacing:0.361px;font-family:'Liberation Sans',sans-serif;">Thông số kinh doanh</div>
<div class="a" style="left:794px;top:957px;width:1px;height:26px;background:#a8a8a8"></div>
<div class="t" style="left:809.00px;top:959.00px;font-size:19.1px;color:#444;font-weight:normal;letter-spacing:0.625px;font-family:'Liberation Sans',sans-serif;">Dòng tiền</div>
<div class="a" style="left:912px;top:957px;width:1px;height:26px;background:#a8a8a8"></div>
<div class="t" style="left:931.00px;top:959.00px;font-size:19.1px;color:#444;font-weight:normal;letter-spacing:0.143px;font-family:'Liberation Sans',sans-serif;">Độ nhạy 2 chiều</div>
<div class="a" style="left:1090px;top:953px;width:178px;height:31px;background:#fff"></div>
<div class="a" style="left:1090px;top:981px;width:178px;height:3px;background:#217346"></div>
<div class="t" style="left:1102.50px;top:959.00px;font-size:19.1px;color:#217346;font-weight:bold;letter-spacing:0.536px;font-family:'Liberation Sans',sans-serif;">Độ nhạy 1 chiều</div>
<svg width="24" height="24" style="left:1306px;top:958px" viewBox="0 0 24 24"><g stroke="#666" stroke-width="1.3" fill="none"><circle cx="12" cy="12" r="10.5"/><path d="M12 6.5 V17.5 M6.5 12 H17.5"/></g></svg>
<div class="a" style="left:1352px;top:962px;width:3px;height:3px;background:#a6a6a6"></div>
<div class="a" style="left:1352px;top:968px;width:3px;height:3px;background:#a6a6a6"></div>
<div class="a" style="left:1352px;top:974px;width:3px;height:3px;background:#a6a6a6"></div>
<div class="a" style="left:1372px;top:957px;width:515px;height:25px;background:#f0f0f0"></div>
<div class="a" style="left:1372px;top:957px;width:25px;height:25px;background:#fff;border:1px solid #aaa"></div>
<svg width="8" height="12" style="left:1380px;top:963px" viewBox="0 0 8 12"><path d="M7 0.5 L1 6 L7 11.5 Z" fill="#222"/></svg>
<div class="a" style="left:1396px;top:957px;width:449px;height:25px;background:#fff;border:1px solid #aaa;border-left:2px solid #aaa"></div>
<div class="a" style="left:1863px;top:957px;width:25px;height:25px;background:#fff;border:1px solid #aaa"></div>
<svg width="8" height="12" style="left:1871px;top:963px" viewBox="0 0 8 12"><path d="M1 0.5 L7 6 L1 11.5 Z" fill="#222"/></svg>
<div class="a" style="left:0px;top:988px;width:1920px;height:32px;background:#f3f2f1"></div>
<div class="t" style="left:9.80px;top:997.70px;font-size:14.9px;color:#444;font-weight:normal;letter-spacing:-0.075px;font-family:'Liberation Sans',sans-serif;">Ready</div>
<svg width="30" height="26" style="left:78px;top:992px" viewBox="78 992 30 26"><g stroke="#444" stroke-width="1.3" fill="none" stroke-linecap="round" stroke-linejoin="round"><circle cx="90.4" cy="996.9" r="2.4"/><path d="M86.8 1002 C83 1000.8 81.5 999.8 82.1 998.6 C82.7 997.4 84.5 997.8 87.8 998.8 C89.5 999.4 91.5 999.4 93.5 998.8 C96.5 997.6 98.6 997.2 99.3 998.4 C99.9 999.6 98.5 1000.6 94.4 1002"/><path d="M86.8 1002 C87.2 1005 86.5 1008 84.8 1011 C84 1013 84.8 1014.3 86.3 1014.2 C87.5 1014.1 88.5 1012 90.3 1007 C90.8 1008 91.2 1009.2 91.6 1010"/><path d="M92.6 1004.4 L101.6 1013.7 M101.6 1004.4 L92.6 1013.7"/></g></svg>
<div class="t" style="left:108.70px;top:997.70px;font-size:14.9px;color:#444;font-weight:normal;letter-spacing:0.132px;font-family:'Liberation Sans',sans-serif;">Accessibility: Investigate</div>
<div class="a" style="left:1475px;top:988px;width:60px;height:32px;background:#d2d0ce"></div>
<svg width="20" height="20" style="left:1494px;top:993px" viewBox="0 0 20 20"><g fill="#444"><rect x="0" y="0" width="20" height="20"/></g><g fill="#d2d0ce"><rect x="2" y="2" width="4" height="4"/><rect x="8" y="2" width="4" height="4"/><rect x="14" y="2" width="4" height="4"/><rect x="2" y="8" width="4" height="4"/><rect x="8" y="8" width="4" height="4"/><rect x="14" y="8" width="4" height="4"/><rect x="2" y="14" width="4" height="4"/><rect x="8" y="14" width="4" height="4"/><rect x="14" y="14" width="4" height="4"/></g></svg>
<svg width="100" height="30" style="left:1545px;top:988px" viewBox="1545 988 100 30"><g stroke="#444" stroke-width="1.3" fill="none"><rect x="1555.3" y="994.5" width="19.2" height="17.4"/><rect x="1559.9" y="997.6" width="10" height="11.2"/><path d="M1562.2 1000.3 H1567.7 M1562.2 1003.3 H1567.7 M1562.2 1006.3 H1567.7"/><rect x="1615.5" y="994.5" width="19" height="17.4"/><path d="M1615.5 1004.8 H1627.2 V994.5 M1621 994.5 V1004.8"/></g></svg>
<div class="a" style="left:1663px;top:1003px;width:11px;height:1.5px;background:#555"></div>
<div class="a" style="left:1683px;top:1003px;width:148px;height:2px;background:#555"></div>
<div class="a" style="left:1726px;top:995px;width:7px;height:17px;background:#444"></div>
<div class="a" style="left:1756px;top:1000px;width:1.5px;height:9px;background:#555"></div>
<div class="a" style="left:1838px;top:1003px;width:13px;height:1.5px;background:#555"></div>
<div class="a" style="left:1843.5px;top:997px;width:1.5px;height:13px;background:#555"></div>
<div class="t" style="left:1868.50px;top:997.00px;font-size:15.3px;color:#555;font-weight:normal;letter-spacing:0.500px;font-family:'Liberation Sans',sans-serif;">65%</div>
</body></html>
